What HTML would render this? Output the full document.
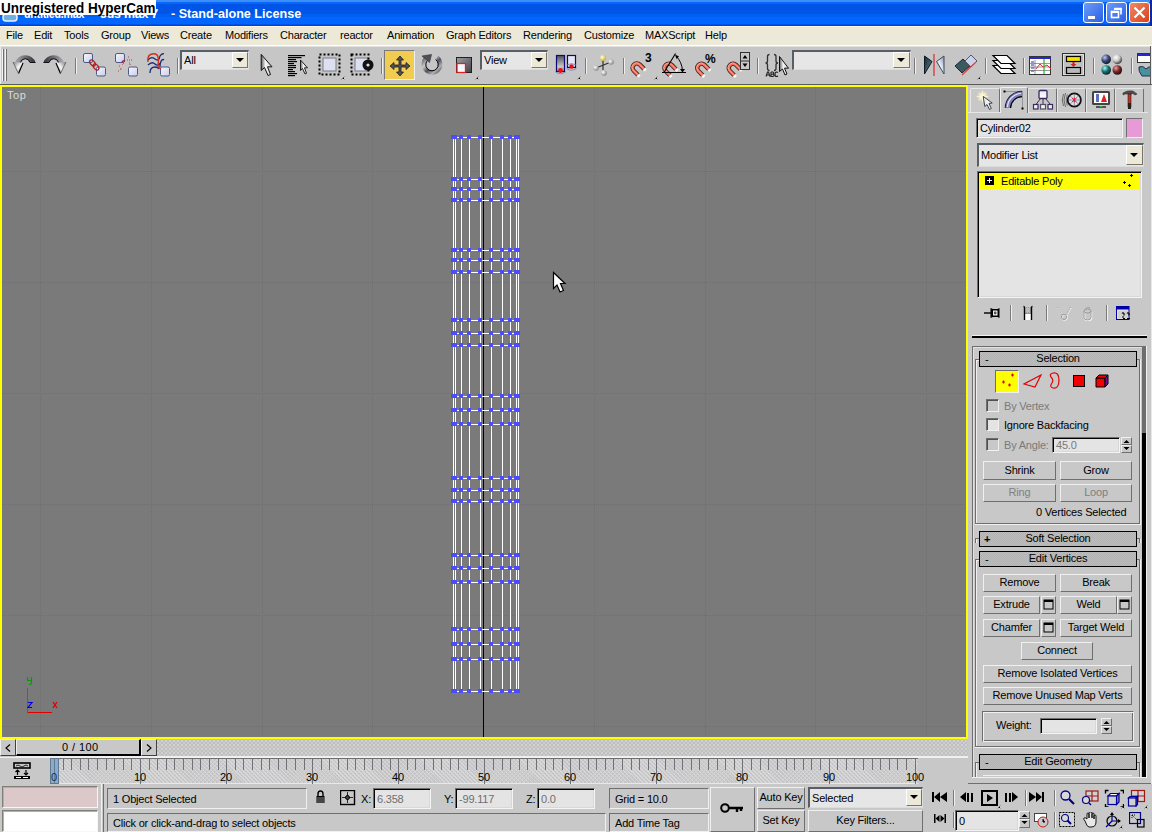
<!DOCTYPE html>
<html><head><meta charset="utf-8"><style>
html,body{margin:0;padding:0;}
body{width:1152px;height:832px;position:relative;overflow:hidden;background:#c8c8c8;font-family:"Liberation Sans",sans-serif;}
body>div{position:absolute;}
.t{position:absolute;white-space:nowrap;font-family:"Liberation Sans",sans-serif;letter-spacing:-0.2px;}
</style></head><body>
<div style="left:0px;top:0px;width:1152px;height:26px;background:linear-gradient(#3c8ef8 0 2px,#0866f8 2px 4px,#0054e6 4px 14px,#005ef2 14px 17px,#0066ff 17px 24px,#0050ea 24px 25px,#0040d4 25px 26px)"></div>
<div style="left:1150px;top:0px;width:2px;height:26px;background:#0a2a9c"></div>
<svg style="position:absolute;left:2px;top:12px;" width="17" height="10" viewBox="0 0 17 10"><rect x="1" y="2" width="14" height="7" rx="3" fill="#6fb0e0" stroke="#e8f2ff" stroke-width="1.5"/></svg>
<div class="t" style="left:24px;top:7px;font-size:13px;line-height:13px;color:#fff;font-weight:bold;transform:scaleX(0.81);transform-origin:0 0">untitled.max</div>
<div class="t" style="left:100px;top:7px;font-size:13px;line-height:13px;color:#fff;font-weight:bold;transform:scaleX(0.95);transform-origin:0 0">3ds max 7</div>
<div class="t" style="left:171px;top:7px;font-size:13px;line-height:13px;color:#fff;font-weight:bold;letter-spacing:0;transform:scaleX(0.97);transform-origin:0 0">- Stand-alone License</div>
<div style="left:1083px;top:2px;width:21px;height:21px;box-sizing:border-box;border:1px solid #fff;border-radius:3px;background:linear-gradient(135deg,#6c9cf8,#2a5fe6)"></div>
<svg style="position:absolute;left:1083px;top:2px;" width="21" height="21" viewBox="0 0 21 21"><rect x="5" y="14" width="7" height="3" fill="#fff"/></svg>
<div style="left:1106px;top:2px;width:21px;height:21px;box-sizing:border-box;border:1px solid #fff;border-radius:3px;background:linear-gradient(135deg,#6c9cf8,#2a5fe6)"></div>
<svg style="position:absolute;left:1106px;top:2px;" width="21" height="21" viewBox="0 0 21 21"><rect x="5.5" y="9.5" width="7" height="6" fill="none" stroke="#fff" stroke-width="1.6"/><rect x="5" y="9" width="8" height="2" fill="#fff"/><path d="M8.5 6.5h6.5v6" fill="none" stroke="#fff" stroke-width="1.6"/><rect x="8" y="6" width="7.5" height="2" fill="#fff"/></svg>
<div style="left:1129px;top:2px;width:21px;height:21px;box-sizing:border-box;border:1px solid #fff;border-radius:3px;background:linear-gradient(135deg,#f08a64,#d8401c)"></div>
<svg style="position:absolute;left:1129px;top:2px;" width="21" height="21" viewBox="0 0 21 21"><path d="M5.5 5.5L15.5 15.5M15.5 5.5L5.5 15.5" stroke="#fff" stroke-width="2.2"/></svg>
<div style="left:0px;top:0px;width:156px;height:15px;background:#fff"></div>
<div class="t" style="left:1px;top:1px;font-size:13.5px;line-height:13.5px;color:#000;font-weight:bold;letter-spacing:0;transform:scale(1,1.06);transform-origin:0 0">Unregistered HyperCam</div>
<div style="left:0px;top:26px;width:1152px;height:19px;background:#ece9d8"></div>
<div style="left:0px;top:26px;width:1152px;height:1px;background:#fdf8e6"></div>
<div style="left:0px;top:45px;width:1152px;height:1px;background:#fff"></div>
<div style="left:0px;top:46px;width:1152px;height:1px;background:#e0e0e0"></div>
<div class="t" style="left:6px;top:30px;font-size:11px;line-height:11px;color:#000;">File</div>
<div class="t" style="left:34px;top:30px;font-size:11px;line-height:11px;color:#000;">Edit</div>
<div class="t" style="left:64px;top:30px;font-size:11px;line-height:11px;color:#000;">Tools</div>
<div class="t" style="left:101px;top:30px;font-size:11px;line-height:11px;color:#000;">Group</div>
<div class="t" style="left:141px;top:30px;font-size:11px;line-height:11px;color:#000;">Views</div>
<div class="t" style="left:180px;top:30px;font-size:11px;line-height:11px;color:#000;">Create</div>
<div class="t" style="left:225px;top:30px;font-size:11px;line-height:11px;color:#000;">Modifiers</div>
<div class="t" style="left:280px;top:30px;font-size:11px;line-height:11px;color:#000;">Character</div>
<div class="t" style="left:340px;top:30px;font-size:11px;line-height:11px;color:#000;">reactor</div>
<div class="t" style="left:387px;top:30px;font-size:11px;line-height:11px;color:#000;">Animation</div>
<div class="t" style="left:446px;top:30px;font-size:11px;line-height:11px;color:#000;">Graph Editors</div>
<div class="t" style="left:523px;top:30px;font-size:11px;line-height:11px;color:#000;">Rendering</div>
<div class="t" style="left:584px;top:30px;font-size:11px;line-height:11px;color:#000;">Customize</div>
<div class="t" style="left:645px;top:30px;font-size:11px;line-height:11px;color:#000;">MAXScript</div>
<div class="t" style="left:705px;top:30px;font-size:11px;line-height:11px;color:#000;">Help</div>
<div style="left:0px;top:47px;width:1152px;height:37px;background:#c6c6c6"></div>
<div style="left:0px;top:47px;width:1px;height:37px;background:#ececec"></div>
<div style="left:1150px;top:46px;width:1px;height:38px;background:#5a5a5a"></div>
<div style="left:1151px;top:46px;width:1px;height:38px;background:#ece9d8"></div>
<div style="left:0px;top:84px;width:1152px;height:1px;background:#5a5a5a"></div>
<div style="left:2px;top:49px;width:1px;height:32px;background:#f4f4f4"></div>
<div style="left:3px;top:49px;width:1px;height:32px;background:#707070"></div>
<div style="left:5px;top:49px;width:1px;height:32px;background:#f4f4f4"></div>
<div style="left:6px;top:49px;width:1px;height:32px;background:#707070"></div>
<div style="left:75px;top:58px;width:1px;height:16px;background:#7a7a7a"></div>
<div style="left:76px;top:58px;width:1px;height:16px;background:#f0f0f0"></div>
<div style="left:177px;top:58px;width:1px;height:16px;background:#7a7a7a"></div>
<div style="left:178px;top:58px;width:1px;height:16px;background:#f0f0f0"></div>
<div style="left:381px;top:58px;width:1px;height:16px;background:#7a7a7a"></div>
<div style="left:382px;top:58px;width:1px;height:16px;background:#f0f0f0"></div>
<div style="left:585px;top:58px;width:1px;height:16px;background:#7a7a7a"></div>
<div style="left:586px;top:58px;width:1px;height:16px;background:#f0f0f0"></div>
<div style="left:623px;top:58px;width:1px;height:16px;background:#7a7a7a"></div>
<div style="left:624px;top:58px;width:1px;height:16px;background:#f0f0f0"></div>
<div style="left:757px;top:58px;width:1px;height:16px;background:#7a7a7a"></div>
<div style="left:758px;top:58px;width:1px;height:16px;background:#f0f0f0"></div>
<div style="left:914px;top:58px;width:1px;height:16px;background:#7a7a7a"></div>
<div style="left:915px;top:58px;width:1px;height:16px;background:#f0f0f0"></div>
<div style="left:985px;top:58px;width:1px;height:16px;background:#7a7a7a"></div>
<div style="left:986px;top:58px;width:1px;height:16px;background:#f0f0f0"></div>
<div style="left:1023px;top:58px;width:1px;height:16px;background:#7a7a7a"></div>
<div style="left:1024px;top:58px;width:1px;height:16px;background:#f0f0f0"></div>
<div style="left:1093px;top:58px;width:1px;height:16px;background:#7a7a7a"></div>
<div style="left:1094px;top:58px;width:1px;height:16px;background:#f0f0f0"></div>
<div style="left:1131px;top:58px;width:1px;height:16px;background:#7a7a7a"></div>
<div style="left:1132px;top:58px;width:1px;height:16px;background:#f0f0f0"></div>
<svg style="position:absolute;left:10px;top:50px;" width="27" height="26" viewBox="0 0 27 26"><defs><linearGradient id="arcg" x1="0" y1="0" x2="1" y2="0"><stop offset="0" stop-color="#a8a8a8"/><stop offset=".5" stop-color="#707078"/><stop offset="1" stop-color="#30303a"/></linearGradient><linearGradient id="ahg" x1="0" y1="0" x2="1" y2="1"><stop offset="0" stop-color="#808080"/><stop offset=".5" stop-color="#f4f4f8"/><stop offset="1" stop-color="#909090"/></linearGradient></defs><path d="M5 13A10.5 9.5 0 0 1 25.5 12.5H20A5 5.5 0 0 0 10.5 12.5Z" fill="url(#arcg)"/><path d="M10.5 12.5A5 5.5 0 0 1 20 12.5" fill="none" stroke="#000" stroke-width="1"/><path d="M20 12.5H25.5" stroke="#111" stroke-width="1"/><path d="M3 12L13 13L8.5 23.5Z" fill="url(#ahg)"/><path d="M13 13L8.5 23.5" stroke="#000" stroke-width="1.2"/><path d="M3 12L8.5 23.5" stroke="#555" stroke-width=".8"/></svg>
<svg style="position:absolute;left:42px;top:50px;" width="27" height="26" viewBox="0 0 27 26"><g transform="translate(27,0) scale(-1,1)"><defs><linearGradient id="arcg2" x1="0" y1="0" x2="1" y2="0"><stop offset="0" stop-color="#b0b0b8"/><stop offset=".5" stop-color="#707078"/><stop offset="1" stop-color="#30303a"/></linearGradient><linearGradient id="ahg2" x1="0" y1="0" x2="1" y2="1"><stop offset="0" stop-color="#808080"/><stop offset=".5" stop-color="#f4f4f8"/><stop offset="1" stop-color="#909090"/></linearGradient></defs><path d="M5 13A10.5 9.5 0 0 1 25.5 12.5H20A5 5.5 0 0 0 10.5 12.5Z" fill="url(#arcg2)"/><path d="M10.5 12.5A5 5.5 0 0 1 20 12.5" fill="none" stroke="#000" stroke-width="1"/><path d="M20 12.5H25.5" stroke="#111" stroke-width="1"/><path d="M3 12L13 13L8.5 23.5Z" fill="url(#ahg2)"/><path d="M13 13L8.5 23.5" stroke="#000" stroke-width="1.2"/><path d="M3 12L8.5 23.5" stroke="#555" stroke-width=".8"/></g></svg>
<svg style="position:absolute;left:82px;top:52px;" width="25" height="26" viewBox="0 0 25 26"><defs><linearGradient id="sqg" x1="0" y1="0" x2="1" y2="1"><stop offset="0" stop-color="#f8f8ff"/><stop offset="1" stop-color="#c8cce8"/></linearGradient></defs><rect x="1.5" y="1.5" width="9" height="9" rx="1.5" fill="url(#sqg)" stroke="#4a5a8a" stroke-width="1"/><rect x="14.5" y="15" width="9" height="9" rx="1.5" fill="url(#sqg)" stroke="#4a5a8a" stroke-width="1"/><ellipse cx="10.5" cy="11" rx="2.2" ry="3.5" transform="rotate(-40 10.5 11)" fill="none" stroke="#b02020" stroke-width="1.3"/><ellipse cx="14" cy="15" rx="2.2" ry="3.5" transform="rotate(-40 14 15)" fill="none" stroke="#b02020" stroke-width="1.3"/></svg>
<svg style="position:absolute;left:114px;top:52px;" width="25" height="26" viewBox="0 0 25 26"><rect x="1.5" y="1.5" width="9" height="9" rx="1.5" fill="url(#sqg)" stroke="#4a5a8a" stroke-width="1"/><rect x="14.5" y="15" width="9" height="9" rx="1.5" fill="url(#sqg)" stroke="#4a5a8a" stroke-width="1"/><path d="M8 10.5Q9 8 11 9" fill="none" stroke="#b02020" stroke-width="1.4"/><path d="M10 11L8 13M5 14h1M6 17h1M7 16.5v1M4 19h2" stroke="#c04040" stroke-width="1" stroke-dasharray="1 1"/><path d="M14 5h1M13 8h5M15 11h2M16 12v2" stroke="#c04040" stroke-width="1" stroke-dasharray="1 1"/></svg>
<svg style="position:absolute;left:147px;top:52px;" width="25" height="26" viewBox="0 0 25 26"><rect x="13.5" y="15" width="9" height="9" rx="1.5" fill="url(#sqg)" stroke="#4a5a8a" stroke-width="1"/><path d="M1 8Q4 4 8 7T13 4Q15 1 17 2M1 13Q5 9 8 12T14 10M3 21Q3 15 8 15Q11 15 12 17M13 15Q13 10 15 8Q16 7 17 8" fill="none" stroke="#1a2a7a" stroke-width="1.3"/><path d="M1 10Q0 3 5 2Q10 1 11 5Q12 9 11 12Q11 16 14 17" fill="none" stroke="#d03020" stroke-width="1.4"/></svg>
<div style="left:180px;top:50px;width:69px;height:20px;background:#e6e6e6;box-sizing:border-box;border-style:solid;border-width:2px 1px 1px 2px;border-color:#585e66 #dcdcdc #dcdcdc #585e66"></div>
<div style="left:232px;top:52px;width:16px;height:16px;background:#ece9d8;box-sizing:border-box;border:1px solid;border-color:#fff #7a7468 #7a7468 #fff"></div>
<svg style="position:absolute;left:236px;top:58px;" width="8" height="4" viewBox="0 0 8 4"><path d="M0 0H8L4 4Z" fill="#000"/></svg>
<div class="t" style="left:184px;top:55px;font-size:11px;line-height:11px;color:#000;">All</div>
<svg style="position:absolute;left:259px;top:53px;" width="16" height="24" viewBox="0 0 16 24"><defs><linearGradient id="selg" x1="0" y1="0" x2="1" y2="0"><stop offset="0" stop-color="#606060"/><stop offset=".4" stop-color="#f4f4f4"/><stop offset="1" stop-color="#d0d0d0"/></linearGradient></defs><path d="M2.2 1.4V17.5L5.5 14.5L9 22.5L11.5 21.5L8.5 13.8H13Z" fill="url(#selg)" stroke="#101010" stroke-width="1"/></svg>
<svg style="position:absolute;left:288px;top:55px;" width="20" height="22" viewBox="0 0 20 22"><rect x="0" y="0" width="17" height="1.2" fill="#000"/><rect x="0" y="2" width="13.5" height="1.2" fill="#000"/><rect x="0" y="4" width="8" height="1.2" fill="#000"/><rect x="0" y="6" width="9" height="1.2" fill="#000"/><rect x="0" y="8" width="6" height="1.2" fill="#000"/><rect x="0" y="10" width="8" height="1.2" fill="#000"/><rect x="0" y="12" width="8" height="1.2" fill="#000"/><rect x="0" y="14" width="5" height="1.2" fill="#000"/><rect x="0" y="16" width="7" height="1.2" fill="#000"/><rect x="0" y="18" width="9" height="1.2" fill="#000"/><rect x="0" y="20" width="7" height="1.2" fill="#000"/><path d="M12.5 5V15.5L14.5 13.5L17 19L18.5 18.3L16.5 12.8H19.5Z" fill="url(#selg)" stroke="#101010" stroke-width=".9"/></svg>
<svg style="position:absolute;left:318px;top:53px;" width="26" height="24" viewBox="0 0 26 24"><rect x="5" y="5" width="13" height="13" fill="#dde0ee" stroke="#7a7a8a"/><rect x="1.5" y="1.5" width="20" height="20" fill="none" stroke="#000" stroke-width="2" stroke-dasharray="2 2"/></svg>
<svg style="position:absolute;left:341px;top:76px;" width="4" height="4" viewBox="0 0 4 4"><path d="M4 0V4H0Z" fill="#000"/><path d="M3.5 0.5V3.5H0.5" fill="none" stroke="#fff" stroke-width=".8"/></svg>
<svg style="position:absolute;left:350px;top:53px;" width="25" height="24" viewBox="0 0 25 24"><rect x="5" y="5" width="13" height="13" fill="#dde0ee" stroke="#7a7a8a"/><rect x="1.5" y="1.5" width="17" height="20" fill="none" stroke="#000" stroke-width="2" stroke-dasharray="2 2"/><circle cx="18" cy="12" r="5.5" fill="#111"/><circle cx="18" cy="12" r="1.6" fill="#ddd"/></svg>
<div style="left:384px;top:50px;width:31px;height:30px;background:#f0cc50;box-sizing:border-box;border:1px solid;border-color:#7a7a7a #f0f0f0 #f0f0f0 #7a7a7a"></div>
<svg style="position:absolute;left:389px;top:55px;" width="22" height="22" viewBox="0 0 22 22"><path d="M11 1L14.5 5H12V10H17V7.5L21 11L17 14.5V12H12V17H14.5L11 21L7.5 17H10V12H5V14.5L1 11L5 7.5V10H10V5H7.5Z" fill="#505058" stroke="#202020" stroke-width=".8"/></svg>
<svg style="position:absolute;left:416px;top:48px;" width="32" height="32" viewBox="0 0 32 32"><defs><linearGradient id="rotg" x1="0" y1="0" x2="1" y2="1"><stop offset="0" stop-color="#606068"/><stop offset=".3" stop-color="#c8c8cc"/><stop offset=".55" stop-color="#505058"/><stop offset=".8" stop-color="#b0b0b8"/><stop offset="1" stop-color="#505058"/></linearGradient></defs><path d="M21 9.5A8.3 8.3 0 1 1 11 9.5" fill="none" stroke="url(#rotg)" stroke-width="4.2"/><path d="M19.6 11.6A6.2 6.2 0 1 1 12.4 11.6" fill="none" stroke="#000" stroke-width="1"/><path d="M6 8L15.5 6.5L13.5 14.5Z" fill="#505058" stroke="#333" stroke-width=".6"/></svg>
<svg style="position:absolute;left:456px;top:57px;" width="17" height="17" viewBox="0 0 17 17"><defs><linearGradient id="scg" x1="0" y1="0" x2="1" y2="1"><stop offset="0" stop-color="#a0a0a8"/><stop offset="1" stop-color="#404048"/></linearGradient></defs><rect x=".5" y=".5" width="15" height="15" fill="url(#scg)" stroke="#202020"/><rect x="1" y="6.5" width="8.5" height="9" fill="#f4f6ff" stroke="#e02020" stroke-width="1.3"/></svg>
<svg style="position:absolute;left:475px;top:76px;" width="4" height="4" viewBox="0 0 4 4"><path d="M4 0V4H0Z" fill="#000"/><path d="M3.5 0.5V3.5H0.5" fill="none" stroke="#fff" stroke-width=".8"/></svg>
<div style="left:480px;top:50px;width:68px;height:20px;background:#e6e6e6;box-sizing:border-box;border-style:solid;border-width:2px 1px 1px 2px;border-color:#585e66 #dcdcdc #dcdcdc #585e66"></div>
<div style="left:531px;top:52px;width:16px;height:16px;background:#ece9d8;box-sizing:border-box;border:1px solid;border-color:#fff #7a7468 #7a7468 #fff"></div>
<svg style="position:absolute;left:535px;top:58px;" width="8" height="4" viewBox="0 0 8 4"><path d="M0 0H8L4 4Z" fill="#000"/></svg>
<div class="t" style="left:484px;top:55px;font-size:11px;line-height:11px;color:#000;">View</div>
<svg style="position:absolute;left:554px;top:53px;" width="26" height="24" viewBox="0 0 26 24"><defs><linearGradient id="pvg" x1="0" y1="0" x2="0" y2="1"><stop offset="0" stop-color="#505058"/><stop offset=".7" stop-color="#c8c8c8"/><stop offset="1" stop-color="#909098"/></linearGradient><radialGradient id="sph" cx=".35" cy=".35" r=".7"><stop offset="0" stop-color="#fff"/><stop offset="1" stop-color="#808080"/></radialGradient><radialGradient id="sphy" cx=".35" cy=".35" r=".7"><stop offset="0" stop-color="#fffff0"/><stop offset="1" stop-color="#c8b020"/></radialGradient></defs><rect x="2.5" y="2.5" width="8" height="16" fill="url(#pvg)" stroke="#0a0a70" stroke-width="1.2"/><path d="M1.5 19Q6.5 22.5 11.5 19" fill="none" stroke="#7080c0" stroke-width=".8"/><circle cx="6.5" cy="17.5" r="2.4" fill="#e81010"/><rect x="13.5" y="2.5" width="8" height="12" fill="#e4e6f4" stroke="#0a0a70" stroke-width="1.2"/><path d="M13 12Q17.5 9 22 12M12.5 15.5Q17.5 19 22.5 15.5" fill="none" stroke="#7080c0" stroke-width=".8"/><circle cx="17.5" cy="13.5" r="2.2" fill="#e81010"/></svg>
<svg style="position:absolute;left:577px;top:76px;" width="4" height="4" viewBox="0 0 4 4"><path d="M4 0V4H0Z" fill="#000"/><path d="M3.5 0.5V3.5H0.5" fill="none" stroke="#fff" stroke-width=".8"/></svg>
<svg style="position:absolute;left:592px;top:54px;" width="24" height="22" viewBox="0 0 24 22"><path d="M11 4V16M4 14L19 8" stroke="#303038" stroke-width="1.2"/><circle cx="11" cy="4" r="3" fill="url(#sphy)"/><circle cx="19" cy="8" r="2.8" fill="url(#sph)"/><circle cx="4" cy="14" r="2.8" fill="url(#sph)"/><circle cx="12" cy="19" r="2.8" fill="url(#sph)"/></svg>
<svg style="position:absolute;left:626px;top:50px;" width="130" height="30" viewBox="0 0 130 30"><path d="M12.00 24.98L7.76 20.74A4.3 4.3 0 0 1 13.84 14.66L18.08 18.90" fill="none" stroke="#402020" stroke-width="4.4"/><path d="M12.00 24.98L7.76 20.74A4.3 4.3 0 0 1 13.84 14.66L18.08 18.90" fill="none" stroke="#f07058" stroke-width="2.8"/><path d="M12.00 24.98L7.76 20.74A4.3 4.3 0 0 1 13.84 14.66L18.08 18.90" fill="none" stroke="#ffb0a0" stroke-width="0.8" transform="translate(-0.5,-0.5)"/><path d="M12.00 24.98L13.56 26.54M18.08 18.90L19.64 20.46" stroke="#fff" stroke-width="3"/><text x="19" y="12" font-family="Liberation Sans" font-weight="bold" font-size="12">3</text><path d="M43.90 25.28L39.66 21.04A4.3 4.3 0 0 1 45.74 14.96L49.98 19.20" fill="none" stroke="#402020" stroke-width="4.4"/><path d="M43.90 25.28L39.66 21.04A4.3 4.3 0 0 1 45.74 14.96L49.98 19.20" fill="none" stroke="#f07058" stroke-width="2.8"/><path d="M43.90 25.28L39.66 21.04A4.3 4.3 0 0 1 45.74 14.96L49.98 19.20" fill="none" stroke="#ffb0a0" stroke-width="0.8" transform="translate(-0.5,-0.5)"/><path d="M43.90 25.28L45.46 26.84M49.98 19.20L51.54 20.76" stroke="#fff" stroke-width="3"/><path d="M36 22.5H60M38 22.5L49.5 3.5" fill="none" stroke="#000" stroke-width="1.1"/><path d="M50 6Q56 12 56.5 21" fill="none" stroke="#000" stroke-width="1"/><path d="M49 4.5L53 6.5L50.5 9Z M54 19L59 19L56.5 22.5Z" fill="#000"/><path d="M76.70 25.28L72.46 21.04A4.3 4.3 0 0 1 78.54 14.96L82.78 19.20" fill="none" stroke="#402020" stroke-width="4.4"/><path d="M76.70 25.28L72.46 21.04A4.3 4.3 0 0 1 78.54 14.96L82.78 19.20" fill="none" stroke="#f07058" stroke-width="2.8"/><path d="M76.70 25.28L72.46 21.04A4.3 4.3 0 0 1 78.54 14.96L82.78 19.20" fill="none" stroke="#ffb0a0" stroke-width="0.8" transform="translate(-0.5,-0.5)"/><path d="M76.70 25.28L78.26 26.84M82.78 19.20L84.34 20.76" stroke="#fff" stroke-width="3"/><text x="79" y="13" font-family="Liberation Sans" font-weight="bold" font-size="12">%</text><path d="M108.20 25.28L103.96 21.04A4.3 4.3 0 0 1 110.04 14.96L114.28 19.20" fill="none" stroke="#402020" stroke-width="4.4"/><path d="M108.20 25.28L103.96 21.04A4.3 4.3 0 0 1 110.04 14.96L114.28 19.20" fill="none" stroke="#f07058" stroke-width="2.8"/><path d="M108.20 25.28L103.96 21.04A4.3 4.3 0 0 1 110.04 14.96L114.28 19.20" fill="none" stroke="#ffb0a0" stroke-width="0.8" transform="translate(-0.5,-0.5)"/><path d="M108.20 25.28L109.76 26.84M114.28 19.20L115.84 20.76" stroke="#fff" stroke-width="3"/><rect x="114.5" y="2.5" width="9" height="17" fill="#c8c8c8" stroke="#303030"/><path d="M114.5 11H123.5" stroke="#303030"/><path d="M116.5 8.5L119 5L121.5 8.5ZM116.5 13.5L119 17L121.5 13.5Z" fill="#000"/></svg>
<svg style="position:absolute;left:654px;top:76px;" width="4" height="4" viewBox="0 0 4 4"><path d="M4 0V4H0Z" fill="#000"/><path d="M3.5 0.5V3.5H0.5" fill="none" stroke="#fff" stroke-width=".8"/></svg>
<svg style="position:absolute;left:762px;top:52px;" width="28" height="26" viewBox="0 0 28 26"><path d="M7.5 2.5Q5.5 2.5 5.5 4.5V9Q5.5 11 3.5 11Q5.5 11 5.5 13V16.5Q5.5 18.5 7.5 18.5M12 2.5Q14 2.5 14 4.5V9Q14 11 16 11Q14 11 14 13V16.5Q14 18.5 12 18.5" fill="none" stroke="#303030" stroke-width="1.3"/><path d="M4 24.5L5.5 20H6.5L8 24.5M4.7 23H7.3M9 20V24.5H11Q12 24.5 12 23.3Q12 22.2 11 22.2H9M9 20H10.8Q11.7 20 11.7 21.1Q11.7 22.2 10.8 22.2M16 20.5Q15.5 20 14.5 20Q13 20 13 22.2Q13 24.5 14.5 24.5Q15.5 24.5 16 24" fill="none" stroke="#202020" stroke-width="1.1"/><path d="M17.5 4.5V19.5L20.5 17L23 23L25 22L22.5 16.2H26.5Z" fill="url(#selg)" stroke="#101010" stroke-width="1"/></svg>
<div style="left:792px;top:50px;width:119px;height:20px;background:#e6e6e6;box-sizing:border-box;border-style:solid;border-width:2px 1px 1px 2px;border-color:#585e66 #dcdcdc #dcdcdc #585e66"></div>
<div style="left:893px;top:52px;width:17px;height:16px;background:#ece9d8;box-sizing:border-box;border:1px solid;border-color:#fff #7a7468 #7a7468 #fff"></div>
<svg style="position:absolute;left:897px;top:58px;" width="8" height="4" viewBox="0 0 8 4"><path d="M0 0H8L4 4Z" fill="#000"/></svg>
<svg style="position:absolute;left:923px;top:53px;" width="23" height="23" viewBox="0 0 23 23"><defs><linearGradient id="mrl" x1="0" y1="0" x2="1" y2="1"><stop offset="0" stop-color="#102838"/><stop offset="1" stop-color="#6a8a90"/></linearGradient><linearGradient id="mrr" x1="1" y1="0" x2="0" y2="1"><stop offset="0" stop-color="#8090a8"/><stop offset=".5" stop-color="#e8ecf8"/><stop offset="1" stop-color="#7a8898"/></linearGradient></defs><path d="M1.5 3L9 8.5L1.5 21Z" fill="url(#mrl)" stroke="#101820" stroke-width="1"/><path d="M21 3L13.5 8.5L21 21Z" fill="url(#mrr)" stroke="#404858" stroke-width="1"/><path d="M11 1V23" stroke="#d85050" stroke-width="1.6"/></svg>
<svg style="position:absolute;left:954px;top:54px;" width="24" height="22" viewBox="0 0 24 22"><path d="M1 12L9 5L16 12L8 19Z" fill="#3a5a60" stroke="#223"/><path d="M11 7L17 1L23 7L17 13Z" fill="#c8d4ec" stroke="#556"/><path d="M8 21L22 8" stroke="#e04040" stroke-width="1.2"/></svg>
<svg style="position:absolute;left:977px;top:76px;" width="4" height="4" viewBox="0 0 4 4"><path d="M4 0V4H0Z" fill="#000"/><path d="M3.5 0.5V3.5H0.5" fill="none" stroke="#fff" stroke-width=".8"/></svg>
<svg style="position:absolute;left:990px;top:50px;" width="28" height="28" viewBox="0 0 28 28"><path d="M3 15.5H17L25 23.5H11Z" fill="#fff" stroke="#000" stroke-width="1.2"/><path d="M3 10.5H17L25 18.5H11Z" fill="#fff" stroke="#000" stroke-width="1.2"/><path d="M3 5.5H17L25 13.5H11Z" fill="#fff" stroke="#000" stroke-width="1.2"/></svg>
<svg style="position:absolute;left:1029px;top:56px;" width="23" height="20" viewBox="0 0 23 20"><rect x=".5" y=".5" width="21" height="18" fill="#fff" stroke="#333"/><rect x="1" y="1" width="21" height="2" fill="#2828c8"/><path d="M2 6h3M2 9h3M2 12h3M2 15h3" stroke="#2828c8" stroke-width="1.2"/><path d="M6 4V18M1 7.5H22M1 11H22M1 14.5H22" stroke="#555" stroke-width=".6"/><path d="M7 13L11 8L14 11L18 9L22 13" fill="none" stroke="#d03030"/><path d="M15 3V18" stroke="#30b030" stroke-width="1.2"/></svg>
<svg style="position:absolute;left:1062px;top:53px;" width="24" height="24" viewBox="0 0 24 24"><rect x=".5" y=".5" width="22" height="22" fill="#c0c0c0" stroke="#303030" stroke-width="1"/><rect x="1.5" y="1.5" width="20" height="20" fill="none" stroke="#e8e8e8" stroke-width=".8"/><rect x="4.5" y="3.5" width="14" height="5" fill="#f8e000" stroke="#000" stroke-width="1.2"/><rect x="4.5" y="14.5" width="14" height="6" fill="#b8b8b8" stroke="#000" stroke-width="1.2"/><path d="M8.5 11L11.5 14L14.5 11Z" fill="#d02020"/><path d="M11.5 9V12" stroke="#d02020" stroke-width="2"/></svg>
<svg style="position:absolute;left:1100px;top:53px;" width="24" height="24" viewBox="0 0 24 24"><defs><radialGradient id="sp1" cx=".35" cy=".3" r=".75"><stop offset="0" stop-color="#c0c8f0"/><stop offset=".5" stop-color="#3a4a78"/><stop offset="1" stop-color="#101828"/></radialGradient><radialGradient id="sp2" cx=".35" cy=".3" r=".75"><stop offset="0" stop-color="#ffffff"/><stop offset=".5" stop-color="#c8c8c8"/><stop offset="1" stop-color="#303030"/></radialGradient><radialGradient id="sp3" cx=".35" cy=".3" r=".75"><stop offset="0" stop-color="#a0ffff"/><stop offset=".5" stop-color="#1a7070"/><stop offset="1" stop-color="#082020"/></radialGradient><radialGradient id="sp4" cx=".35" cy=".3" r=".75"><stop offset="0" stop-color="#f0a0a0"/><stop offset=".5" stop-color="#7a2a2a"/><stop offset="1" stop-color="#200808"/></radialGradient></defs><circle cx="6.2" cy="6.4" r="4.8" fill="url(#sp1)"/><circle cx="17.3" cy="6.4" r="4.8" fill="url(#sp2)"/><circle cx="6.2" cy="17" r="4.8" fill="url(#sp3)"/><circle cx="17.3" cy="17" r="4.8" fill="url(#sp4)"/></svg>
<svg style="position:absolute;left:1137px;top:53px;" width="13" height="24" viewBox="0 0 13 24"><rect x=".5" y=".5" width="14" height="9" fill="#fff" stroke="#333"/><rect x="1" y="1" width="14" height="2" fill="#2828c8"/><path d="M2 14Q6 12 9 16Q12 13 14 14V23H5Q1 18 2 14Z" fill="#4a90a0" stroke="#234"/></svg>
<div style="left:0px;top:85px;width:968px;height:654px;background:#ffff00"></div>
<div style="left:2px;top:87px;width:964px;height:650px;background:#7a7a7a"></div>
<div style="left:40px;top:87px;width:1px;height:650px;background:repeating-linear-gradient(#707074 0 1px,transparent 1px 2px)"></div>
<div style="left:151px;top:87px;width:1px;height:650px;background:repeating-linear-gradient(#707074 0 1px,transparent 1px 2px)"></div>
<div style="left:262px;top:87px;width:1px;height:650px;background:repeating-linear-gradient(#707074 0 1px,transparent 1px 2px)"></div>
<div style="left:372px;top:87px;width:1px;height:650px;background:repeating-linear-gradient(#707074 0 1px,transparent 1px 2px)"></div>
<div style="left:594px;top:87px;width:1px;height:650px;background:repeating-linear-gradient(#707074 0 1px,transparent 1px 2px)"></div>
<div style="left:705px;top:87px;width:1px;height:650px;background:repeating-linear-gradient(#707074 0 1px,transparent 1px 2px)"></div>
<div style="left:815px;top:87px;width:1px;height:650px;background:repeating-linear-gradient(#707074 0 1px,transparent 1px 2px)"></div>
<div style="left:926px;top:87px;width:1px;height:650px;background:repeating-linear-gradient(#707074 0 1px,transparent 1px 2px)"></div>
<div style="left:2px;top:171px;width:964px;height:1px;background:repeating-linear-gradient(90deg,#707074 0 1px,transparent 1px 2px)"></div>
<div style="left:2px;top:282px;width:964px;height:1px;background:repeating-linear-gradient(90deg,#707074 0 1px,transparent 1px 2px)"></div>
<div style="left:2px;top:393px;width:964px;height:1px;background:repeating-linear-gradient(90deg,#707074 0 1px,transparent 1px 2px)"></div>
<div style="left:2px;top:504px;width:964px;height:1px;background:repeating-linear-gradient(90deg,#707074 0 1px,transparent 1px 2px)"></div>
<div style="left:2px;top:615px;width:964px;height:1px;background:repeating-linear-gradient(90deg,#707074 0 1px,transparent 1px 2px)"></div>
<div style="left:2px;top:726px;width:964px;height:1px;background:repeating-linear-gradient(90deg,#707074 0 1px,transparent 1px 2px)"></div>
<div style="left:483px;top:87px;width:1px;height:650px;background:#000"></div>
<div style="left:453px;top:137px;width:1px;height:555px;background:#fff"></div>
<div style="left:455px;top:137px;width:1px;height:555px;background:#fff"></div>
<div style="left:461px;top:137px;width:1px;height:555px;background:#fff"></div>
<div style="left:469px;top:137px;width:1px;height:555px;background:#fff"></div>
<div style="left:480px;top:137px;width:1px;height:555px;background:#fff"></div>
<div style="left:491px;top:137px;width:1px;height:555px;background:#fff"></div>
<div style="left:502px;top:137px;width:1px;height:555px;background:#fff"></div>
<div style="left:510px;top:137px;width:1px;height:555px;background:#fff"></div>
<div style="left:516px;top:137px;width:1px;height:555px;background:#fff"></div>
<div style="left:518px;top:137px;width:1px;height:555px;background:#fff"></div>
<div style="left:453px;top:137px;width:66px;height:1px;background:#fff"></div>
<div style="left:453px;top:179px;width:66px;height:1px;background:#fff"></div>
<div style="left:453px;top:189px;width:66px;height:1px;background:#fff"></div>
<div style="left:453px;top:200px;width:66px;height:1px;background:#fff"></div>
<div style="left:453px;top:250px;width:66px;height:1px;background:#fff"></div>
<div style="left:453px;top:260px;width:66px;height:1px;background:#fff"></div>
<div style="left:453px;top:272px;width:66px;height:1px;background:#fff"></div>
<div style="left:453px;top:320px;width:66px;height:1px;background:#fff"></div>
<div style="left:453px;top:333px;width:66px;height:1px;background:#fff"></div>
<div style="left:453px;top:345px;width:66px;height:1px;background:#fff"></div>
<div style="left:453px;top:396px;width:66px;height:1px;background:#fff"></div>
<div style="left:453px;top:410px;width:66px;height:1px;background:#fff"></div>
<div style="left:453px;top:424px;width:66px;height:1px;background:#fff"></div>
<div style="left:453px;top:478px;width:66px;height:1px;background:#fff"></div>
<div style="left:453px;top:490px;width:66px;height:1px;background:#fff"></div>
<div style="left:453px;top:501px;width:66px;height:1px;background:#fff"></div>
<div style="left:453px;top:555px;width:66px;height:1px;background:#fff"></div>
<div style="left:453px;top:568px;width:66px;height:1px;background:#fff"></div>
<div style="left:453px;top:582px;width:66px;height:1px;background:#fff"></div>
<div style="left:453px;top:629px;width:66px;height:1px;background:#fff"></div>
<div style="left:453px;top:644px;width:66px;height:1px;background:#fff"></div>
<div style="left:453px;top:659px;width:66px;height:1px;background:#fff"></div>
<div style="left:453px;top:691px;width:66px;height:1px;background:#fff"></div>
<div style="left:451px;top:135px;width:4px;height:4px;background:#4c4cff"></div>
<div style="left:453px;top:135px;width:4px;height:4px;background:#4c4cff"></div>
<div style="left:459px;top:135px;width:4px;height:4px;background:#4c4cff"></div>
<div style="left:467px;top:135px;width:4px;height:4px;background:#4c4cff"></div>
<div style="left:478px;top:135px;width:4px;height:4px;background:#4c4cff"></div>
<div style="left:489px;top:135px;width:4px;height:4px;background:#4c4cff"></div>
<div style="left:500px;top:135px;width:4px;height:4px;background:#4c4cff"></div>
<div style="left:508px;top:135px;width:4px;height:4px;background:#4c4cff"></div>
<div style="left:514px;top:135px;width:4px;height:4px;background:#4c4cff"></div>
<div style="left:516px;top:135px;width:4px;height:4px;background:#4c4cff"></div>
<div style="left:451px;top:177px;width:4px;height:4px;background:#4c4cff"></div>
<div style="left:453px;top:177px;width:4px;height:4px;background:#4c4cff"></div>
<div style="left:459px;top:177px;width:4px;height:4px;background:#4c4cff"></div>
<div style="left:467px;top:177px;width:4px;height:4px;background:#4c4cff"></div>
<div style="left:478px;top:177px;width:4px;height:4px;background:#4c4cff"></div>
<div style="left:489px;top:177px;width:4px;height:4px;background:#4c4cff"></div>
<div style="left:500px;top:177px;width:4px;height:4px;background:#4c4cff"></div>
<div style="left:508px;top:177px;width:4px;height:4px;background:#4c4cff"></div>
<div style="left:514px;top:177px;width:4px;height:4px;background:#4c4cff"></div>
<div style="left:516px;top:177px;width:4px;height:4px;background:#4c4cff"></div>
<div style="left:451px;top:187px;width:4px;height:4px;background:#4c4cff"></div>
<div style="left:453px;top:187px;width:4px;height:4px;background:#4c4cff"></div>
<div style="left:459px;top:187px;width:4px;height:4px;background:#4c4cff"></div>
<div style="left:467px;top:187px;width:4px;height:4px;background:#4c4cff"></div>
<div style="left:478px;top:187px;width:4px;height:4px;background:#4c4cff"></div>
<div style="left:489px;top:187px;width:4px;height:4px;background:#4c4cff"></div>
<div style="left:500px;top:187px;width:4px;height:4px;background:#4c4cff"></div>
<div style="left:508px;top:187px;width:4px;height:4px;background:#4c4cff"></div>
<div style="left:514px;top:187px;width:4px;height:4px;background:#4c4cff"></div>
<div style="left:516px;top:187px;width:4px;height:4px;background:#4c4cff"></div>
<div style="left:451px;top:198px;width:4px;height:4px;background:#4c4cff"></div>
<div style="left:453px;top:198px;width:4px;height:4px;background:#4c4cff"></div>
<div style="left:459px;top:198px;width:4px;height:4px;background:#4c4cff"></div>
<div style="left:467px;top:198px;width:4px;height:4px;background:#4c4cff"></div>
<div style="left:478px;top:198px;width:4px;height:4px;background:#4c4cff"></div>
<div style="left:489px;top:198px;width:4px;height:4px;background:#4c4cff"></div>
<div style="left:500px;top:198px;width:4px;height:4px;background:#4c4cff"></div>
<div style="left:508px;top:198px;width:4px;height:4px;background:#4c4cff"></div>
<div style="left:514px;top:198px;width:4px;height:4px;background:#4c4cff"></div>
<div style="left:516px;top:198px;width:4px;height:4px;background:#4c4cff"></div>
<div style="left:451px;top:248px;width:4px;height:4px;background:#4c4cff"></div>
<div style="left:453px;top:248px;width:4px;height:4px;background:#4c4cff"></div>
<div style="left:459px;top:248px;width:4px;height:4px;background:#4c4cff"></div>
<div style="left:467px;top:248px;width:4px;height:4px;background:#4c4cff"></div>
<div style="left:478px;top:248px;width:4px;height:4px;background:#4c4cff"></div>
<div style="left:489px;top:248px;width:4px;height:4px;background:#4c4cff"></div>
<div style="left:500px;top:248px;width:4px;height:4px;background:#4c4cff"></div>
<div style="left:508px;top:248px;width:4px;height:4px;background:#4c4cff"></div>
<div style="left:514px;top:248px;width:4px;height:4px;background:#4c4cff"></div>
<div style="left:516px;top:248px;width:4px;height:4px;background:#4c4cff"></div>
<div style="left:451px;top:258px;width:4px;height:4px;background:#4c4cff"></div>
<div style="left:453px;top:258px;width:4px;height:4px;background:#4c4cff"></div>
<div style="left:459px;top:258px;width:4px;height:4px;background:#4c4cff"></div>
<div style="left:467px;top:258px;width:4px;height:4px;background:#4c4cff"></div>
<div style="left:478px;top:258px;width:4px;height:4px;background:#4c4cff"></div>
<div style="left:489px;top:258px;width:4px;height:4px;background:#4c4cff"></div>
<div style="left:500px;top:258px;width:4px;height:4px;background:#4c4cff"></div>
<div style="left:508px;top:258px;width:4px;height:4px;background:#4c4cff"></div>
<div style="left:514px;top:258px;width:4px;height:4px;background:#4c4cff"></div>
<div style="left:516px;top:258px;width:4px;height:4px;background:#4c4cff"></div>
<div style="left:451px;top:270px;width:4px;height:4px;background:#4c4cff"></div>
<div style="left:453px;top:270px;width:4px;height:4px;background:#4c4cff"></div>
<div style="left:459px;top:270px;width:4px;height:4px;background:#4c4cff"></div>
<div style="left:467px;top:270px;width:4px;height:4px;background:#4c4cff"></div>
<div style="left:478px;top:270px;width:4px;height:4px;background:#4c4cff"></div>
<div style="left:489px;top:270px;width:4px;height:4px;background:#4c4cff"></div>
<div style="left:500px;top:270px;width:4px;height:4px;background:#4c4cff"></div>
<div style="left:508px;top:270px;width:4px;height:4px;background:#4c4cff"></div>
<div style="left:514px;top:270px;width:4px;height:4px;background:#4c4cff"></div>
<div style="left:516px;top:270px;width:4px;height:4px;background:#4c4cff"></div>
<div style="left:451px;top:318px;width:4px;height:4px;background:#4c4cff"></div>
<div style="left:453px;top:318px;width:4px;height:4px;background:#4c4cff"></div>
<div style="left:459px;top:318px;width:4px;height:4px;background:#4c4cff"></div>
<div style="left:467px;top:318px;width:4px;height:4px;background:#4c4cff"></div>
<div style="left:478px;top:318px;width:4px;height:4px;background:#4c4cff"></div>
<div style="left:489px;top:318px;width:4px;height:4px;background:#4c4cff"></div>
<div style="left:500px;top:318px;width:4px;height:4px;background:#4c4cff"></div>
<div style="left:508px;top:318px;width:4px;height:4px;background:#4c4cff"></div>
<div style="left:514px;top:318px;width:4px;height:4px;background:#4c4cff"></div>
<div style="left:516px;top:318px;width:4px;height:4px;background:#4c4cff"></div>
<div style="left:451px;top:331px;width:4px;height:4px;background:#4c4cff"></div>
<div style="left:453px;top:331px;width:4px;height:4px;background:#4c4cff"></div>
<div style="left:459px;top:331px;width:4px;height:4px;background:#4c4cff"></div>
<div style="left:467px;top:331px;width:4px;height:4px;background:#4c4cff"></div>
<div style="left:478px;top:331px;width:4px;height:4px;background:#4c4cff"></div>
<div style="left:489px;top:331px;width:4px;height:4px;background:#4c4cff"></div>
<div style="left:500px;top:331px;width:4px;height:4px;background:#4c4cff"></div>
<div style="left:508px;top:331px;width:4px;height:4px;background:#4c4cff"></div>
<div style="left:514px;top:331px;width:4px;height:4px;background:#4c4cff"></div>
<div style="left:516px;top:331px;width:4px;height:4px;background:#4c4cff"></div>
<div style="left:451px;top:343px;width:4px;height:4px;background:#4c4cff"></div>
<div style="left:453px;top:343px;width:4px;height:4px;background:#4c4cff"></div>
<div style="left:459px;top:343px;width:4px;height:4px;background:#4c4cff"></div>
<div style="left:467px;top:343px;width:4px;height:4px;background:#4c4cff"></div>
<div style="left:478px;top:343px;width:4px;height:4px;background:#4c4cff"></div>
<div style="left:489px;top:343px;width:4px;height:4px;background:#4c4cff"></div>
<div style="left:500px;top:343px;width:4px;height:4px;background:#4c4cff"></div>
<div style="left:508px;top:343px;width:4px;height:4px;background:#4c4cff"></div>
<div style="left:514px;top:343px;width:4px;height:4px;background:#4c4cff"></div>
<div style="left:516px;top:343px;width:4px;height:4px;background:#4c4cff"></div>
<div style="left:451px;top:394px;width:4px;height:4px;background:#4c4cff"></div>
<div style="left:453px;top:394px;width:4px;height:4px;background:#4c4cff"></div>
<div style="left:459px;top:394px;width:4px;height:4px;background:#4c4cff"></div>
<div style="left:467px;top:394px;width:4px;height:4px;background:#4c4cff"></div>
<div style="left:478px;top:394px;width:4px;height:4px;background:#4c4cff"></div>
<div style="left:489px;top:394px;width:4px;height:4px;background:#4c4cff"></div>
<div style="left:500px;top:394px;width:4px;height:4px;background:#4c4cff"></div>
<div style="left:508px;top:394px;width:4px;height:4px;background:#4c4cff"></div>
<div style="left:514px;top:394px;width:4px;height:4px;background:#4c4cff"></div>
<div style="left:516px;top:394px;width:4px;height:4px;background:#4c4cff"></div>
<div style="left:451px;top:408px;width:4px;height:4px;background:#4c4cff"></div>
<div style="left:453px;top:408px;width:4px;height:4px;background:#4c4cff"></div>
<div style="left:459px;top:408px;width:4px;height:4px;background:#4c4cff"></div>
<div style="left:467px;top:408px;width:4px;height:4px;background:#4c4cff"></div>
<div style="left:478px;top:408px;width:4px;height:4px;background:#4c4cff"></div>
<div style="left:489px;top:408px;width:4px;height:4px;background:#4c4cff"></div>
<div style="left:500px;top:408px;width:4px;height:4px;background:#4c4cff"></div>
<div style="left:508px;top:408px;width:4px;height:4px;background:#4c4cff"></div>
<div style="left:514px;top:408px;width:4px;height:4px;background:#4c4cff"></div>
<div style="left:516px;top:408px;width:4px;height:4px;background:#4c4cff"></div>
<div style="left:451px;top:422px;width:4px;height:4px;background:#4c4cff"></div>
<div style="left:453px;top:422px;width:4px;height:4px;background:#4c4cff"></div>
<div style="left:459px;top:422px;width:4px;height:4px;background:#4c4cff"></div>
<div style="left:467px;top:422px;width:4px;height:4px;background:#4c4cff"></div>
<div style="left:478px;top:422px;width:4px;height:4px;background:#4c4cff"></div>
<div style="left:489px;top:422px;width:4px;height:4px;background:#4c4cff"></div>
<div style="left:500px;top:422px;width:4px;height:4px;background:#4c4cff"></div>
<div style="left:508px;top:422px;width:4px;height:4px;background:#4c4cff"></div>
<div style="left:514px;top:422px;width:4px;height:4px;background:#4c4cff"></div>
<div style="left:516px;top:422px;width:4px;height:4px;background:#4c4cff"></div>
<div style="left:451px;top:476px;width:4px;height:4px;background:#4c4cff"></div>
<div style="left:453px;top:476px;width:4px;height:4px;background:#4c4cff"></div>
<div style="left:459px;top:476px;width:4px;height:4px;background:#4c4cff"></div>
<div style="left:467px;top:476px;width:4px;height:4px;background:#4c4cff"></div>
<div style="left:478px;top:476px;width:4px;height:4px;background:#4c4cff"></div>
<div style="left:489px;top:476px;width:4px;height:4px;background:#4c4cff"></div>
<div style="left:500px;top:476px;width:4px;height:4px;background:#4c4cff"></div>
<div style="left:508px;top:476px;width:4px;height:4px;background:#4c4cff"></div>
<div style="left:514px;top:476px;width:4px;height:4px;background:#4c4cff"></div>
<div style="left:516px;top:476px;width:4px;height:4px;background:#4c4cff"></div>
<div style="left:451px;top:488px;width:4px;height:4px;background:#4c4cff"></div>
<div style="left:453px;top:488px;width:4px;height:4px;background:#4c4cff"></div>
<div style="left:459px;top:488px;width:4px;height:4px;background:#4c4cff"></div>
<div style="left:467px;top:488px;width:4px;height:4px;background:#4c4cff"></div>
<div style="left:478px;top:488px;width:4px;height:4px;background:#4c4cff"></div>
<div style="left:489px;top:488px;width:4px;height:4px;background:#4c4cff"></div>
<div style="left:500px;top:488px;width:4px;height:4px;background:#4c4cff"></div>
<div style="left:508px;top:488px;width:4px;height:4px;background:#4c4cff"></div>
<div style="left:514px;top:488px;width:4px;height:4px;background:#4c4cff"></div>
<div style="left:516px;top:488px;width:4px;height:4px;background:#4c4cff"></div>
<div style="left:451px;top:499px;width:4px;height:4px;background:#4c4cff"></div>
<div style="left:453px;top:499px;width:4px;height:4px;background:#4c4cff"></div>
<div style="left:459px;top:499px;width:4px;height:4px;background:#4c4cff"></div>
<div style="left:467px;top:499px;width:4px;height:4px;background:#4c4cff"></div>
<div style="left:478px;top:499px;width:4px;height:4px;background:#4c4cff"></div>
<div style="left:489px;top:499px;width:4px;height:4px;background:#4c4cff"></div>
<div style="left:500px;top:499px;width:4px;height:4px;background:#4c4cff"></div>
<div style="left:508px;top:499px;width:4px;height:4px;background:#4c4cff"></div>
<div style="left:514px;top:499px;width:4px;height:4px;background:#4c4cff"></div>
<div style="left:516px;top:499px;width:4px;height:4px;background:#4c4cff"></div>
<div style="left:451px;top:553px;width:4px;height:4px;background:#4c4cff"></div>
<div style="left:453px;top:553px;width:4px;height:4px;background:#4c4cff"></div>
<div style="left:459px;top:553px;width:4px;height:4px;background:#4c4cff"></div>
<div style="left:467px;top:553px;width:4px;height:4px;background:#4c4cff"></div>
<div style="left:478px;top:553px;width:4px;height:4px;background:#4c4cff"></div>
<div style="left:489px;top:553px;width:4px;height:4px;background:#4c4cff"></div>
<div style="left:500px;top:553px;width:4px;height:4px;background:#4c4cff"></div>
<div style="left:508px;top:553px;width:4px;height:4px;background:#4c4cff"></div>
<div style="left:514px;top:553px;width:4px;height:4px;background:#4c4cff"></div>
<div style="left:516px;top:553px;width:4px;height:4px;background:#4c4cff"></div>
<div style="left:451px;top:566px;width:4px;height:4px;background:#4c4cff"></div>
<div style="left:453px;top:566px;width:4px;height:4px;background:#4c4cff"></div>
<div style="left:459px;top:566px;width:4px;height:4px;background:#4c4cff"></div>
<div style="left:467px;top:566px;width:4px;height:4px;background:#4c4cff"></div>
<div style="left:478px;top:566px;width:4px;height:4px;background:#4c4cff"></div>
<div style="left:489px;top:566px;width:4px;height:4px;background:#4c4cff"></div>
<div style="left:500px;top:566px;width:4px;height:4px;background:#4c4cff"></div>
<div style="left:508px;top:566px;width:4px;height:4px;background:#4c4cff"></div>
<div style="left:514px;top:566px;width:4px;height:4px;background:#4c4cff"></div>
<div style="left:516px;top:566px;width:4px;height:4px;background:#4c4cff"></div>
<div style="left:451px;top:580px;width:4px;height:4px;background:#4c4cff"></div>
<div style="left:453px;top:580px;width:4px;height:4px;background:#4c4cff"></div>
<div style="left:459px;top:580px;width:4px;height:4px;background:#4c4cff"></div>
<div style="left:467px;top:580px;width:4px;height:4px;background:#4c4cff"></div>
<div style="left:478px;top:580px;width:4px;height:4px;background:#4c4cff"></div>
<div style="left:489px;top:580px;width:4px;height:4px;background:#4c4cff"></div>
<div style="left:500px;top:580px;width:4px;height:4px;background:#4c4cff"></div>
<div style="left:508px;top:580px;width:4px;height:4px;background:#4c4cff"></div>
<div style="left:514px;top:580px;width:4px;height:4px;background:#4c4cff"></div>
<div style="left:516px;top:580px;width:4px;height:4px;background:#4c4cff"></div>
<div style="left:451px;top:627px;width:4px;height:4px;background:#4c4cff"></div>
<div style="left:453px;top:627px;width:4px;height:4px;background:#4c4cff"></div>
<div style="left:459px;top:627px;width:4px;height:4px;background:#4c4cff"></div>
<div style="left:467px;top:627px;width:4px;height:4px;background:#4c4cff"></div>
<div style="left:478px;top:627px;width:4px;height:4px;background:#4c4cff"></div>
<div style="left:489px;top:627px;width:4px;height:4px;background:#4c4cff"></div>
<div style="left:500px;top:627px;width:4px;height:4px;background:#4c4cff"></div>
<div style="left:508px;top:627px;width:4px;height:4px;background:#4c4cff"></div>
<div style="left:514px;top:627px;width:4px;height:4px;background:#4c4cff"></div>
<div style="left:516px;top:627px;width:4px;height:4px;background:#4c4cff"></div>
<div style="left:451px;top:642px;width:4px;height:4px;background:#4c4cff"></div>
<div style="left:453px;top:642px;width:4px;height:4px;background:#4c4cff"></div>
<div style="left:459px;top:642px;width:4px;height:4px;background:#4c4cff"></div>
<div style="left:467px;top:642px;width:4px;height:4px;background:#4c4cff"></div>
<div style="left:478px;top:642px;width:4px;height:4px;background:#4c4cff"></div>
<div style="left:489px;top:642px;width:4px;height:4px;background:#4c4cff"></div>
<div style="left:500px;top:642px;width:4px;height:4px;background:#4c4cff"></div>
<div style="left:508px;top:642px;width:4px;height:4px;background:#4c4cff"></div>
<div style="left:514px;top:642px;width:4px;height:4px;background:#4c4cff"></div>
<div style="left:516px;top:642px;width:4px;height:4px;background:#4c4cff"></div>
<div style="left:451px;top:657px;width:4px;height:4px;background:#4c4cff"></div>
<div style="left:453px;top:657px;width:4px;height:4px;background:#4c4cff"></div>
<div style="left:459px;top:657px;width:4px;height:4px;background:#4c4cff"></div>
<div style="left:467px;top:657px;width:4px;height:4px;background:#4c4cff"></div>
<div style="left:478px;top:657px;width:4px;height:4px;background:#4c4cff"></div>
<div style="left:489px;top:657px;width:4px;height:4px;background:#4c4cff"></div>
<div style="left:500px;top:657px;width:4px;height:4px;background:#4c4cff"></div>
<div style="left:508px;top:657px;width:4px;height:4px;background:#4c4cff"></div>
<div style="left:514px;top:657px;width:4px;height:4px;background:#4c4cff"></div>
<div style="left:516px;top:657px;width:4px;height:4px;background:#4c4cff"></div>
<div style="left:451px;top:689px;width:4px;height:4px;background:#4c4cff"></div>
<div style="left:453px;top:689px;width:4px;height:4px;background:#4c4cff"></div>
<div style="left:459px;top:689px;width:4px;height:4px;background:#4c4cff"></div>
<div style="left:467px;top:689px;width:4px;height:4px;background:#4c4cff"></div>
<div style="left:478px;top:689px;width:4px;height:4px;background:#4c4cff"></div>
<div style="left:489px;top:689px;width:4px;height:4px;background:#4c4cff"></div>
<div style="left:500px;top:689px;width:4px;height:4px;background:#4c4cff"></div>
<div style="left:508px;top:689px;width:4px;height:4px;background:#4c4cff"></div>
<div style="left:514px;top:689px;width:4px;height:4px;background:#4c4cff"></div>
<div style="left:516px;top:689px;width:4px;height:4px;background:#4c4cff"></div>
<div class="t" style="left:7px;top:90px;font-size:11px;line-height:11px;color:#dcdcdc;letter-spacing:0.6px">Top</div>
<div style="left:27px;top:688px;width:1px;height:25px;background:#00a000"></div>
<div style="left:28px;top:712px;width:24px;height:1px;background:#e00000"></div>
<svg style="position:absolute;left:26px;top:676px;" width="34" height="34" viewBox="0 0 34 34"><path d="M1.5 1V4.5H5.5M5.5 1V7Q5.5 8.5 3 8.5" fill="none" stroke="#00a000" stroke-width="1.2"/><path d="M2 26.5H6L2 31.5H6" fill="none" stroke="#0000e0" stroke-width="1.2"/><path d="M27 26L31 32M31 26L27 32" stroke="#e00000" stroke-width="1.3"/></svg>
<svg style="position:absolute;left:552px;top:271px;" width="15" height="23" viewBox="0 0 15 23"><path d="M1.5 1.5V17.5L5 14L8 21L11.5 19.5L8.5 12.5H13Z" fill="#fff" stroke="#000" stroke-width="1.2" stroke-linejoin="miter"/></svg>
<div style="left:968px;top:85px;width:184px;height:699px;background:#c8c8c8"></div>
<div style="left:1151px;top:85px;width:1px;height:699px;background:#e8e8e8"></div>
<div style="left:970px;top:88px;width:30px;height:24px;background:#c8c8c8;border-top:1px solid #e6e6e6;border-left:1px solid #e6e6e6;border-right:1px solid #707070;box-sizing:border-box;border-radius:2px 2px 0 0"></div>
<div style="left:1000px;top:87px;width:28px;height:26px;background:#c8c8c8;border-top:1px solid #f0f0f0;border-left:1px solid #f0f0f0;border-right:1px solid #6e6e6e;box-sizing:border-box;border-radius:2px 2px 0 0"></div>
<div style="left:1028px;top:88px;width:29px;height:24px;background:#c8c8c8;border-top:1px solid #e6e6e6;border-left:1px solid #e6e6e6;border-right:1px solid #707070;box-sizing:border-box;border-radius:2px 2px 0 0"></div>
<div style="left:1057px;top:88px;width:29px;height:24px;background:#c8c8c8;border-top:1px solid #e6e6e6;border-left:1px solid #e6e6e6;border-right:1px solid #707070;box-sizing:border-box;border-radius:2px 2px 0 0"></div>
<div style="left:1086px;top:88px;width:29px;height:24px;background:#c8c8c8;border-top:1px solid #e6e6e6;border-left:1px solid #e6e6e6;border-right:1px solid #707070;box-sizing:border-box;border-radius:2px 2px 0 0"></div>
<div style="left:1115px;top:88px;width:29px;height:24px;background:#c8c8c8;border-top:1px solid #e6e6e6;border-left:1px solid #e6e6e6;border-right:1px solid #707070;box-sizing:border-box;border-radius:2px 2px 0 0"></div>
<div style="left:968px;top:112px;width:32px;height:1px;background:#e6e6e6"></div>
<div style="left:1028px;top:112px;width:120px;height:1px;background:#e6e6e6"></div>
<svg style="position:absolute;left:974px;top:89px;" width="24" height="24" viewBox="0 0 24 24"><defs><radialGradient id="stg"><stop offset="0" stop-color="#fffff0"/><stop offset=".5" stop-color="#f8f0c0" stop-opacity=".8"/><stop offset="1" stop-color="#f0e8b0" stop-opacity="0"/></radialGradient></defs><circle cx="8.5" cy="7.5" r="6" fill="url(#stg)"/><path d="M8.5 1.5V13.5M2.5 7.5H14.5M4.5 3.5L12.5 11.5M12.5 3.5L4.5 11.5" stroke="#fffbe0" stroke-width=".8" opacity=".8"/><path d="M9.2 7.4L10.8 17.5L13 15.5L15.5 20.5L17.3 19.5L15 14.5L18.2 14Z" fill="#f0f0f4" stroke="#404048" stroke-width="1"/></svg>
<svg style="position:absolute;left:1002px;top:89px;" width="24" height="22" viewBox="0 0 24 22"><defs><linearGradient id="mtg" x1="0" y1="1" x2="1" y2="0"><stop offset="0" stop-color="#303058"/><stop offset=".5" stop-color="#d8d8f8"/><stop offset="1" stop-color="#303058"/></linearGradient></defs><path d="M2.5 2.5H20.5V19.5" fill="none" stroke="#707070" stroke-width=".6"/><rect x="1.5" y="1.5" width="2" height="2" fill="#000"/><rect x="19.5" y="18.5" width="2" height="2" fill="#000"/><path d="M6 19A14 14 0 0 1 20 5" fill="none" stroke="#202040" stroke-width="6.5"/><path d="M6 19A14 14 0 0 1 20 5" fill="none" stroke="#8080b8" stroke-width="4.5"/><path d="M5.5 18A14 14 0 0 1 19 4.5" fill="none" stroke="#e8e8ff" stroke-width="1.2"/><path d="M8.5 19A11.5 11.5 0 0 1 20 7.5" fill="none" stroke="#000" stroke-width="1"/></svg>
<svg style="position:absolute;left:1032px;top:89px;" width="22" height="22" viewBox="0 0 22 22"><defs><linearGradient id="hig" x1="0" y1="0" x2="0" y2="1"><stop offset="0" stop-color="#e8e8f4"/><stop offset="1" stop-color="#ffffff"/></linearGradient></defs><path d="M8.5 9.5L4 15.5M13.5 9.5L18.5 15.5" stroke="#303040" stroke-width="1"/><path d="M11 9V15.5" stroke="#808088" stroke-width="2"/><rect x="7" y="1.5" width="8" height="8" rx="1" fill="url(#hig)" stroke="#3a2a60" stroke-width="1.3"/><rect x="1.5" y="15.5" width="4.5" height="4.5" fill="#f0f0f8" stroke="#3a2a60" stroke-width="1.2"/><rect x="8.5" y="15.5" width="5" height="4.5" fill="#f0f0f8" stroke="#505060" stroke-width="1.2"/><rect x="16" y="15.5" width="4.5" height="4.5" fill="#f0f0f8" stroke="#3a2a60" stroke-width="1.2"/></svg>
<svg style="position:absolute;left:1060px;top:90px;" width="24" height="20" viewBox="0 0 24 20"><circle cx="14.3" cy="10" r="6.6" fill="#e4e4e8" stroke="#111" stroke-width="1.8"/><path d="M14.3 4V16M8.3 10H20.3M10 5.8L18.6 14.2M18.6 5.8L10 14.2" stroke="#6070a0" stroke-width=".7"/><path d="M12 8L16.5 12M16.5 8L12 12M14.3 7.5V12.5" stroke="#e02020" stroke-width=".9"/><path d="M5.5 3Q2.5 10 5.5 17M3.5 4Q1 10 3.5 16M7.3 4.5Q5 10 7.3 15.5" fill="none" stroke="#404040" stroke-width=".7"/></svg>
<svg style="position:absolute;left:1091px;top:90px;" width="20" height="19" viewBox="0 0 20 19"><rect x="1" y="1" width="18" height="14" rx="1.5" fill="#444" /><rect x="3" y="3" width="14" height="10" fill="#fff"/><rect x="5" y="4" width="3" height="8" fill="#6070c0"/><path d="M10 12L13 4L16 12Z" fill="#e02020"/><rect x="5" y="16" width="10" height="2" fill="#555"/><rect x="9" y="16" width="2" height="1" fill="#30c030"/></svg>
<svg style="position:absolute;left:1121px;top:90px;" width="18" height="20" viewBox="0 0 18 20"><path d="M2 3Q6 0 12 1L16 4L14 5L11 3V4H7L5 4Q3 4 2 5Z" fill="#505050" stroke="#222" stroke-width=".5"/><rect x="7" y="4" width="3" height="13" fill="#c03020" stroke="#222" stroke-width=".6"/><path d="M7 13H10V19H7Z" fill="#222"/></svg>
<div style="left:976px;top:118px;width:147px;height:20px;background:#e4e4e4;box-sizing:border-box;border:1px solid;border-color:#6e6e6e #f4f4f4 #f4f4f4 #6e6e6e;box-shadow:inset 1px 1px 0 #000, inset -1px -1px 0 #d8d8d8"></div>
<div class="t" style="left:980px;top:123px;font-size:11px;line-height:11px;color:#000;">Cylinder02</div>
<div style="left:1126px;top:118px;width:17px;height:20px;background:#e89ad6;box-sizing:border-box;border:1px solid;border-color:#707070 #f0f0f0 #f0f0f0 #707070"></div>
<div style="left:977px;top:143px;width:167px;height:24px;background:#e6e6e6;box-sizing:border-box;border-style:solid;border-width:2px 1px 1px 2px;border-color:#585e66 #dcdcdc #dcdcdc #585e66"></div>
<div style="left:1126px;top:145px;width:17px;height:20px;background:#ece9d8;box-sizing:border-box;border:1px solid;border-color:#fff #7a7468 #7a7468 #fff"></div>
<svg style="position:absolute;left:1130px;top:153px;" width="8" height="4" viewBox="0 0 8 4"><path d="M0 0H8L4 4Z" fill="#000"/></svg>
<div class="t" style="left:981px;top:150px;font-size:11px;line-height:11px;color:#000;">Modifier List</div>
<div style="left:977px;top:171px;width:165px;height:127px;background:#e4e4e4;box-sizing:border-box;border:1px solid;border-color:#6e6e6e #f4f4f4 #f4f4f4 #6e6e6e;box-shadow:inset 1px 1px 0 #000, inset -1px -1px 0 #d8d8d8"></div>
<div style="left:979px;top:173px;width:161px;height:16px;background:#ffff00"></div>
<div style="left:985px;top:176px;width:9px;height:9px;background:#000"></div>
<div style="left:987px;top:180px;width:5px;height:1px;background:#fff"></div>
<div style="left:989px;top:178px;width:1px;height:5px;background:#fff"></div>
<div class="t" style="left:1001px;top:176px;font-size:11px;line-height:11px;color:#000;">Editable Poly</div>
<svg style="position:absolute;left:1118px;top:173px;" width="20" height="16" viewBox="0 0 20 16"><rect x="12" y="2" width="3" height="1" fill="#000"/><rect x="13" y="1" width="1" height="3" fill="#000"/><rect x="5" y="9" width="3" height="1" fill="#000"/><rect x="6" y="8" width="1" height="3" fill="#000"/><rect x="10" y="12" width="3" height="1" fill="#000"/><rect x="11" y="11" width="1" height="3" fill="#000"/></svg>
<svg style="position:absolute;left:983px;top:306px;" width="18" height="14" viewBox="0 0 18 14"><path d="M1 7H8" stroke="#000" stroke-width="1.4"/><path d="M7.5 2L10 3H14.5L16.5 2V12L14.5 11H10L7.5 12Z" fill="#000"/><path d="M10 4.5H14.5V9.5H10Z" fill="#f0f0f0"/><circle cx="12.2" cy="7" r="1.4" fill="#555"/></svg>
<div style="left:1010px;top:305px;width:1px;height:16px;background:#7a7a7a"></div>
<div style="left:1011px;top:305px;width:1px;height:16px;background:#f0f0f0"></div>
<svg style="position:absolute;left:1022px;top:305px;" width="12" height="16" viewBox="0 0 12 16"><rect x="3" y="2" width="6" height="7" fill="#9a9a9a"/><path d="M3 3h1M5 3h1M7 3h1M4 4h1M6 4h1M3 5h1M5 5h1M7 5h1M4 6h1M6 6h1M3 7h1M5 7h1M7 7h1" stroke="#e0e0e0" stroke-width="1"/><rect x="3" y="9" width="6" height="6" fill="#fff"/><path d="M2.5 15V3Q2.5 1.5 1.5 1.5M9.5 15V3Q9.5 1.5 10.5 1.5" fill="none" stroke="#000" stroke-width="1.4"/></svg>
<div style="left:1046px;top:305px;width:1px;height:16px;background:#7a7a7a"></div>
<div style="left:1047px;top:305px;width:1px;height:16px;background:#f0f0f0"></div>
<svg style="position:absolute;left:1056px;top:306px;" width="17" height="15" viewBox="0 0 17 15"><path d="M2 2L7 11M15 2L10 11" stroke="#f0f0f0" stroke-width="1.5" stroke-dasharray="1.5 1"/><path d="M1.5 1L6.5 10M14.5 1L9.5 10" stroke="#a0a0a0" stroke-width="1" stroke-dasharray="1.5 1"/><circle cx="8.5" cy="11.5" r="2.6" fill="none" stroke="#f0f0f0" stroke-width="1.3"/><circle cx="8" cy="11" r="2.6" fill="none" stroke="#9a9a9a" stroke-width="1"/></svg>
<svg style="position:absolute;left:1082px;top:306px;" width="12" height="16" viewBox="0 0 12 16"><path d="M2.5 5.5V12Q2.5 14.5 6 14.5Q9.5 14.5 9.5 12V5.5" fill="none" stroke="#f4f4f4" stroke-width="1.6"/><path d="M2 5V11.5Q2 14 5.5 14Q9 14 9 11.5V5" fill="none" stroke="#9a9a9a" stroke-width="1"/><ellipse cx="5.5" cy="5" rx="3.5" ry="2" fill="none" stroke="#9a9a9a"/><path d="M3.5 2.5Q5.5 0.5 8 2" fill="none" stroke="#a0a0a0"/></svg>
<div style="left:1106px;top:305px;width:1px;height:16px;background:#7a7a7a"></div>
<div style="left:1107px;top:305px;width:1px;height:16px;background:#f0f0f0"></div>
<svg style="position:absolute;left:1116px;top:306px;" width="17" height="15" viewBox="0 0 17 15"><rect x=".5" y=".5" width="12.5" height="13" fill="#e8e8e8" stroke="#0000a0"/><rect x="1" y="1" width="12" height="2.5" fill="#0000b0"/><rect x="2" y="4.5" width="10" height="8" fill="#d0d0d0"/><path d="M6 7.5q1-1.5 2 0v2M6 11h2M11 7.5q1-1.5 2 0v2M11 12.5h3M7 12.5h2" fill="none" stroke="#000" stroke-width="1.2"/></svg>
<div style="left:972px;top:335px;width:175px;height:1px;background:#f0f0f0"></div>
<div style="left:972px;top:336px;width:175px;height:2px;background:#000"></div>
<div style="left:972px;top:346px;width:170px;height:1px;background:#6e6e6e"></div>
<div style="left:972px;top:346px;width:1px;height:431px;background:#6e6e6e"></div>
<div style="left:973px;top:347px;width:169px;height:1px;background:#e0e0e0"></div>
<div style="left:973px;top:347px;width:1px;height:430px;background:#e0e0e0"></div>
<div style="left:972px;top:777px;width:175px;height:1px;background:#f0f0f0"></div>
<div style="left:1142px;top:346px;width:4px;height:87px;background:#6e6e6e"></div>
<div style="left:1142px;top:433px;width:4px;height:344px;background:#000"></div>
<div style="left:1146px;top:346px;width:1px;height:432px;background:#f0f0f0"></div>
<div style="left:975px;top:359px;width:4px;height:1px;background:#6e6e6e"></div>
<div style="left:976px;top:360px;width:3px;height:1px;background:#f0f0f0"></div>
<div style="left:975px;top:359px;width:1px;height:164px;background:#6e6e6e"></div>
<div style="left:976px;top:360px;width:1px;height:163px;background:#f0f0f0"></div>
<div style="left:1137px;top:359px;width:3px;height:1px;background:#6e6e6e"></div>
<div style="left:1139px;top:359px;width:1px;height:164px;background:#6e6e6e"></div>
<div style="left:1140px;top:359px;width:1px;height:165px;background:#f0f0f0"></div>
<div style="left:975px;top:523px;width:165px;height:1px;background:#6e6e6e"></div>
<div style="left:975px;top:524px;width:166px;height:1px;background:#f0f0f0"></div>
<div style="left:979px;top:351px;width:158px;height:16px;background-color:#b2b2b2;box-sizing:border-box;border:1px solid #000;background-image:linear-gradient(45deg,rgba(255,255,255,.14) 25%,transparent 25% 75%,rgba(255,255,255,.14) 75%),linear-gradient(45deg,rgba(255,255,255,.14) 25%,transparent 25% 75%,rgba(255,255,255,.14) 75%);background-size:2px 2px;background-position:0 0,1px 1px"></div>
<div class="t" style="left:985px;top:354px;font-size:11px;line-height:11px;color:#000;">-</div>
<div class="t" style="left:979px;top:353px;width:158px;text-align:center;font-size:11px;line-height:11px">Selection</div>
<div style="left:995px;top:370px;width:24px;height:23px;background:#ffff00;box-sizing:border-box;border:1px solid;border-color:#6e6e6e #f0f0f0 #f0f0f0 #6e6e6e"></div>
<svg style="position:absolute;left:995px;top:370px;" width="25" height="23" viewBox="0 0 25 23"><path d="M7 12h3M8.5 10.5v3M13 15h3M14.5 13.5v3M16 5h3M17.5 3.5v3" stroke="#e00000" stroke-width="1.2"/></svg>
<svg style="position:absolute;left:1023px;top:374px;" width="19" height="14" viewBox="0 0 19 14"><path d="M18 1L1 10L12 13Z" fill="none" stroke="#e00000" stroke-width="1.2"/></svg>
<svg style="position:absolute;left:1048px;top:372px;" width="12" height="18" viewBox="0 0 12 18"><path d="M5 1Q11 0 11 8Q11 17 5 16Q1 15 4 11Q6 8 3 5Q1 2 5 1Z" fill="none" stroke="#e00000" stroke-width="1.2"/></svg>
<div style="left:1073px;top:375px;width:12px;height:12px;background:#f00000;border:1px solid #000;box-sizing:border-box"></div>
<svg style="position:absolute;left:1095px;top:374px;" width="16" height="14" viewBox="0 0 16 14"><path d="M1 4H10V13H1Z" fill="#f00000" stroke="#000"/><path d="M1 4L4 1H13L10 4Z" fill="#f00000" stroke="#000"/><path d="M10 4L13 1V10L10 13Z" fill="#8000a0" stroke="#000"/></svg>
<div style="left:986px;top:399px;width:13px;height:13px;box-sizing:border-box;border:1px solid;border-color:#6e6e6e #f0f0f0 #f0f0f0 #6e6e6e;background:#c8c8c8;box-shadow:inset 1px 1px 0 #505050"></div>
<div class="t" style="left:1004px;top:401px;font-size:11px;line-height:11px;color:#7a7a7a;">By Vertex</div>
<div style="left:986px;top:418px;width:13px;height:13px;box-sizing:border-box;border:1px solid;border-color:#6e6e6e #f0f0f0 #f0f0f0 #6e6e6e;background:#e4e4e4;box-shadow:inset 1px 1px 0 #505050"></div>
<div class="t" style="left:1004px;top:420px;font-size:11px;line-height:11px;color:#000;">Ignore Backfacing</div>
<div style="left:986px;top:438px;width:13px;height:13px;box-sizing:border-box;border:1px solid;border-color:#6e6e6e #f0f0f0 #f0f0f0 #6e6e6e;background:#c8c8c8;box-shadow:inset 1px 1px 0 #505050"></div>
<div class="t" style="left:1004px;top:440px;font-size:11px;line-height:11px;color:#7a7a7a;">By Angle:</div>
<div style="left:1052px;top:437px;width:68px;height:16px;background:#e4e4e4;box-sizing:border-box;border:1px solid;border-color:#6e6e6e #f4f4f4 #f4f4f4 #6e6e6e;box-shadow:inset 1px 1px 0 #000, inset -1px -1px 0 #d8d8d8"></div>
<div class="t" style="left:1056px;top:440px;font-size:11px;line-height:11px;color:#7a7a7a;">45.0</div>
<div style="left:1121px;top:437px;width:11px;height:8px;background:#c8c8c8;box-sizing:border-box;border:1px solid;border-color:#f0f0f0 #6e6e6e #6e6e6e #f0f0f0"></div>
<div style="left:1121px;top:445px;width:11px;height:8px;background:#c8c8c8;box-sizing:border-box;border:1px solid;border-color:#f0f0f0 #6e6e6e #6e6e6e #f0f0f0"></div>
<svg style="position:absolute;left:1121px;top:437px;" width="11" height="16" viewBox="0 0 11 16"><path d="M2.5 6L5.5 3L8.5 6Z M2.5 10L5.5 13L8.5 10Z" fill="#000"/></svg>
<div style="left:983px;top:461px;width:73px;height:19px;background:#c8c8c8;box-sizing:border-box;border:1px solid;border-color:#f0f0f0 #6e6e6e #6e6e6e #f0f0f0"></div>
<div class="t" style="left:983px;top:465px;width:73px;text-align:center;font-size:11px;line-height:11px;color:#000">Shrink</div>
<div style="left:1060px;top:461px;width:72px;height:19px;background:#c8c8c8;box-sizing:border-box;border:1px solid;border-color:#f0f0f0 #6e6e6e #6e6e6e #f0f0f0"></div>
<div class="t" style="left:1060px;top:465px;width:72px;text-align:center;font-size:11px;line-height:11px;color:#000">Grow</div>
<div style="left:983px;top:484px;width:73px;height:18px;background:#c8c8c8;box-sizing:border-box;border:1px solid;border-color:#f0f0f0 #6e6e6e #6e6e6e #f0f0f0"></div>
<div class="t" style="left:983px;top:487px;width:73px;text-align:center;font-size:11px;line-height:11px;color:#808080">Ring</div>
<div style="left:1060px;top:484px;width:72px;height:18px;background:#c8c8c8;box-sizing:border-box;border:1px solid;border-color:#f0f0f0 #6e6e6e #6e6e6e #f0f0f0"></div>
<div class="t" style="left:1060px;top:487px;width:72px;text-align:center;font-size:11px;line-height:11px;color:#808080">Loop</div>
<div class="t" style="left:1036px;top:507px;font-size:11px;line-height:11px;color:#000;">0 Vertices Selected</div>
<div style="left:975px;top:538px;width:4px;height:1px;background:#6e6e6e"></div>
<div style="left:975px;top:538px;width:1px;height:5px;background:#6e6e6e"></div>
<div style="left:976px;top:539px;width:1px;height:4px;background:#f0f0f0"></div>
<div style="left:1137px;top:538px;width:3px;height:1px;background:#6e6e6e"></div>
<div style="left:1139px;top:538px;width:1px;height:5px;background:#6e6e6e"></div>
<div style="left:1140px;top:539px;width:1px;height:4px;background:#f0f0f0"></div>
<div style="left:979px;top:531px;width:158px;height:16px;background-color:#b2b2b2;box-sizing:border-box;border:1px solid #000;background-image:linear-gradient(45deg,rgba(255,255,255,.14) 25%,transparent 25% 75%,rgba(255,255,255,.14) 75%),linear-gradient(45deg,rgba(255,255,255,.14) 25%,transparent 25% 75%,rgba(255,255,255,.14) 75%);background-size:2px 2px;background-position:0 0,1px 1px"></div>
<div class="t" style="left:984px;top:534px;font-size:11px;line-height:11px;color:#000;font-weight:bold">+</div>
<div class="t" style="left:979px;top:533px;width:158px;text-align:center;font-size:11px;line-height:11px">Soft Selection</div>
<div style="left:975px;top:559px;width:4px;height:1px;background:#6e6e6e"></div>
<div style="left:976px;top:560px;width:3px;height:1px;background:#f0f0f0"></div>
<div style="left:975px;top:559px;width:1px;height:187px;background:#6e6e6e"></div>
<div style="left:976px;top:560px;width:1px;height:186px;background:#f0f0f0"></div>
<div style="left:1137px;top:559px;width:3px;height:1px;background:#6e6e6e"></div>
<div style="left:1139px;top:559px;width:1px;height:187px;background:#6e6e6e"></div>
<div style="left:1140px;top:559px;width:1px;height:188px;background:#f0f0f0"></div>
<div style="left:975px;top:746px;width:165px;height:1px;background:#6e6e6e"></div>
<div style="left:975px;top:747px;width:166px;height:1px;background:#f0f0f0"></div>
<div style="left:979px;top:551px;width:158px;height:16px;background-color:#b2b2b2;box-sizing:border-box;border:1px solid #000;background-image:linear-gradient(45deg,rgba(255,255,255,.14) 25%,transparent 25% 75%,rgba(255,255,255,.14) 75%),linear-gradient(45deg,rgba(255,255,255,.14) 25%,transparent 25% 75%,rgba(255,255,255,.14) 75%);background-size:2px 2px;background-position:0 0,1px 1px"></div>
<div class="t" style="left:985px;top:554px;font-size:11px;line-height:11px;color:#000;">-</div>
<div class="t" style="left:979px;top:553px;width:158px;text-align:center;font-size:11px;line-height:11px">Edit Vertices</div>
<div style="left:983px;top:574px;width:73px;height:18px;background:#c8c8c8;box-sizing:border-box;border:1px solid;border-color:#f0f0f0 #6e6e6e #6e6e6e #f0f0f0"></div>
<div class="t" style="left:983px;top:577px;width:73px;text-align:center;font-size:11px;line-height:11px;color:#000">Remove</div>
<div style="left:1060px;top:574px;width:72px;height:18px;background:#c8c8c8;box-sizing:border-box;border:1px solid;border-color:#f0f0f0 #6e6e6e #6e6e6e #f0f0f0"></div>
<div class="t" style="left:1060px;top:577px;width:72px;text-align:center;font-size:11px;line-height:11px;color:#000">Break</div>
<div style="left:983px;top:596px;width:57px;height:18px;background:#c8c8c8;box-sizing:border-box;border:1px solid;border-color:#f0f0f0 #6e6e6e #6e6e6e #f0f0f0"></div>
<div class="t" style="left:983px;top:599px;width:57px;text-align:center;font-size:11px;line-height:11px;color:#000">Extrude</div>
<div style="left:1041px;top:596px;width:15px;height:18px;background:#c8c8c8;box-sizing:border-box;border:1px solid;border-color:#f0f0f0 #6e6e6e #6e6e6e #f0f0f0"></div>
<svg style="position:absolute;left:1041px;top:596px;" width="15" height="18" viewBox="0 0 15 18"><rect x="3" y="4" width="9" height="9" fill="none" stroke="#000" stroke-width="1"/><rect x="3" y="4" width="9" height="2" fill="#000"/></svg>
<div style="left:1060px;top:596px;width:57px;height:18px;background:#c8c8c8;box-sizing:border-box;border:1px solid;border-color:#f0f0f0 #6e6e6e #6e6e6e #f0f0f0"></div>
<div class="t" style="left:1060px;top:599px;width:57px;text-align:center;font-size:11px;line-height:11px;color:#000">Weld</div>
<div style="left:1117px;top:596px;width:15px;height:18px;background:#c8c8c8;box-sizing:border-box;border:1px solid;border-color:#f0f0f0 #6e6e6e #6e6e6e #f0f0f0"></div>
<svg style="position:absolute;left:1117px;top:596px;" width="15" height="18" viewBox="0 0 15 18"><rect x="3" y="4" width="9" height="9" fill="none" stroke="#000" stroke-width="1"/><rect x="3" y="4" width="9" height="2" fill="#000"/></svg>
<div style="left:983px;top:619px;width:57px;height:18px;background:#c8c8c8;box-sizing:border-box;border:1px solid;border-color:#f0f0f0 #6e6e6e #6e6e6e #f0f0f0"></div>
<div class="t" style="left:983px;top:622px;width:57px;text-align:center;font-size:11px;line-height:11px;color:#000">Chamfer</div>
<div style="left:1041px;top:619px;width:15px;height:18px;background:#c8c8c8;box-sizing:border-box;border:1px solid;border-color:#f0f0f0 #6e6e6e #6e6e6e #f0f0f0"></div>
<svg style="position:absolute;left:1041px;top:619px;" width="15" height="18" viewBox="0 0 15 18"><rect x="3" y="4" width="9" height="9" fill="none" stroke="#000" stroke-width="1"/><rect x="3" y="4" width="9" height="2" fill="#000"/></svg>
<div style="left:1060px;top:619px;width:72px;height:18px;background:#c8c8c8;box-sizing:border-box;border:1px solid;border-color:#f0f0f0 #6e6e6e #6e6e6e #f0f0f0"></div>
<div class="t" style="left:1060px;top:622px;width:72px;text-align:center;font-size:11px;line-height:11px;color:#000">Target Weld</div>
<div style="left:1021px;top:642px;width:72px;height:18px;background:#c8c8c8;box-sizing:border-box;border:1px solid;border-color:#f0f0f0 #6e6e6e #6e6e6e #f0f0f0"></div>
<div class="t" style="left:1021px;top:645px;width:72px;text-align:center;font-size:11px;line-height:11px;color:#000">Connect</div>
<div style="left:983px;top:665px;width:149px;height:18px;background:#c8c8c8;box-sizing:border-box;border:1px solid;border-color:#f0f0f0 #6e6e6e #6e6e6e #f0f0f0"></div>
<div class="t" style="left:983px;top:668px;width:149px;text-align:center;font-size:11px;line-height:11px;color:#000">Remove Isolated Vertices</div>
<div style="left:983px;top:687px;width:149px;height:18px;background:#c8c8c8;box-sizing:border-box;border:1px solid;border-color:#f0f0f0 #6e6e6e #6e6e6e #f0f0f0"></div>
<div class="t" style="left:983px;top:690px;width:149px;text-align:center;font-size:11px;line-height:11px;color:#000">Remove Unused Map Verts</div>
<div style="left:982px;top:711px;width:152px;height:31px;box-sizing:border-box;border:1px solid;border-color:#6e6e6e #f0f0f0 #f0f0f0 #6e6e6e;box-shadow:inset 1px 1px 0 #f0f0f0, inset -1px -1px 0 #6e6e6e"></div>
<div class="t" style="left:996px;top:720px;font-size:11px;line-height:11px;color:#000;">Weight:</div>
<div style="left:1040px;top:718px;width:57px;height:16px;background:#e4e4e4;box-sizing:border-box;border:1px solid;border-color:#6e6e6e #f4f4f4 #f4f4f4 #6e6e6e;box-shadow:inset 1px 1px 0 #000, inset -1px -1px 0 #d8d8d8"></div>
<div style="left:1101px;top:718px;width:11px;height:8px;background:#c8c8c8;box-sizing:border-box;border:1px solid;border-color:#f0f0f0 #6e6e6e #6e6e6e #f0f0f0"></div>
<div style="left:1101px;top:726px;width:11px;height:8px;background:#c8c8c8;box-sizing:border-box;border:1px solid;border-color:#f0f0f0 #6e6e6e #6e6e6e #f0f0f0"></div>
<svg style="position:absolute;left:1101px;top:718px;" width="11" height="16" viewBox="0 0 11 16"><path d="M2.5 6L5.5 3L8.5 6Z M2.5 10L5.5 13L8.5 10Z" fill="#000"/></svg>
<div style="left:975px;top:762px;width:4px;height:1px;background:#6e6e6e"></div>
<div style="left:975px;top:762px;width:1px;height:15px;background:#6e6e6e"></div>
<div style="left:976px;top:763px;width:1px;height:14px;background:#f0f0f0"></div>
<div style="left:1137px;top:762px;width:3px;height:1px;background:#6e6e6e"></div>
<div style="left:1139px;top:762px;width:1px;height:15px;background:#6e6e6e"></div>
<div style="left:1140px;top:763px;width:1px;height:14px;background:#f0f0f0"></div>
<div style="left:983px;top:775px;width:149px;height:1px;background:#f0f0f0"></div>
<div style="left:979px;top:754px;width:158px;height:16px;background-color:#b2b2b2;box-sizing:border-box;border:1px solid #000;background-image:linear-gradient(45deg,rgba(255,255,255,.14) 25%,transparent 25% 75%,rgba(255,255,255,.14) 75%),linear-gradient(45deg,rgba(255,255,255,.14) 25%,transparent 25% 75%,rgba(255,255,255,.14) 75%);background-size:2px 2px;background-position:0 0,1px 1px"></div>
<div class="t" style="left:985px;top:757px;font-size:11px;line-height:11px;color:#000;">-</div>
<div class="t" style="left:979px;top:756px;width:158px;text-align:center;font-size:11px;line-height:11px">Edit Geometry</div>
<div style="left:968px;top:783px;width:183px;height:1px;background:#6e6e6e"></div>
<div style="left:0px;top:739px;width:968px;height:45px;background:#c8c8c8"></div>
<div style="left:0px;top:784px;width:968px;height:48px;background:#c8c8c8"></div>
<div style="left:16px;top:739px;width:952px;height:17px;background-color:#bfbfbf;background-image:radial-gradient(circle,#d2d2d2 0 0.9px,transparent 1px),radial-gradient(circle,#cccccc 0 0.8px,transparent 0.9px);background-size:4px 4px,4px 4px;background-position:0 0,2px 2px"></div>
<div style="left:0px;top:739px;width:16px;height:17px;background:#c8c8c8;box-sizing:border-box;border:1px solid;border-color:#f0f0f0 #404040 #404040 #f0f0f0"></div>
<svg style="position:absolute;left:4px;top:744px;" width="8" height="8" viewBox="0 0 8 8"><path d="M6 0.5L2 4L6 7.5" fill="none" stroke="#000" stroke-width="1.1"/></svg>
<div style="left:16px;top:739px;width:125px;height:17px;background:#c8c8c8;box-sizing:border-box;border-top:1px solid #f0f0f0;border-left:1px solid #f0f0f0;border-bottom:2px solid #000;border-right:2px solid #000"></div>
<div class="t" style="left:62px;top:742px;font-size:11px;line-height:11px;color:#000;letter-spacing:0.4px">0 / 100</div>
<div style="left:141px;top:739px;width:16px;height:17px;background:#c8c8c8;box-sizing:border-box;border:1px solid;border-color:#f0f0f0 #404040 #404040 #f0f0f0"></div>
<svg style="position:absolute;left:145px;top:744px;" width="8" height="8" viewBox="0 0 8 8"><path d="M2 0.5L6 4L2 7.5" fill="none" stroke="#000" stroke-width="1.1"/></svg>
<div style="left:16px;top:756px;width:952px;height:1px;background:#f0f0f0"></div>
<div style="left:0px;top:757px;width:968px;height:1px;background:#f0f0f0"></div>
<div style="left:50px;top:758px;width:868px;height:26px;background-color:#c4c4c6;background-image:repeating-linear-gradient(45deg,#d8d8d8 0 1px,transparent 1px 2.8px),repeating-linear-gradient(-45deg,rgba(216,216,216,.5) 0 1px,transparent 1px 2.8px)"></div>
<div style="left:50px;top:758px;width:868px;height:1px;background:#707070"></div>
<div style="left:50px;top:783px;width:868px;height:1px;background:#e8e8e8"></div>
<svg style="position:absolute;left:0px;top:758px;" width="968" height="26" viewBox="0 0 968 26"><rect x="54" y="0" width="1" height="0" fill="#707078"/><rect x="63" y="1" width="1" height="11" fill="#707078"/><rect x="71" y="1" width="1" height="11" fill="#707078"/><rect x="80" y="1" width="1" height="11" fill="#707078"/><rect x="88" y="1" width="1" height="11" fill="#707078"/><rect x="97" y="1" width="1" height="11" fill="#707078"/><rect x="106" y="1" width="1" height="11" fill="#707078"/><rect x="114" y="1" width="1" height="11" fill="#707078"/><rect x="123" y="1" width="1" height="11" fill="#707078"/><rect x="131" y="1" width="1" height="11" fill="#707078"/><rect x="140" y="0" width="1" height="26" fill="#707078"/><rect x="149" y="1" width="1" height="11" fill="#707078"/><rect x="157" y="1" width="1" height="11" fill="#707078"/><rect x="166" y="1" width="1" height="11" fill="#707078"/><rect x="174" y="1" width="1" height="11" fill="#707078"/><rect x="183" y="1" width="1" height="11" fill="#707078"/><rect x="192" y="1" width="1" height="11" fill="#707078"/><rect x="200" y="1" width="1" height="11" fill="#707078"/><rect x="209" y="1" width="1" height="11" fill="#707078"/><rect x="218" y="1" width="1" height="11" fill="#707078"/><rect x="226" y="0" width="1" height="26" fill="#707078"/><rect x="235" y="1" width="1" height="11" fill="#707078"/><rect x="243" y="1" width="1" height="11" fill="#707078"/><rect x="252" y="1" width="1" height="11" fill="#707078"/><rect x="261" y="1" width="1" height="11" fill="#707078"/><rect x="269" y="1" width="1" height="11" fill="#707078"/><rect x="278" y="1" width="1" height="11" fill="#707078"/><rect x="286" y="1" width="1" height="11" fill="#707078"/><rect x="295" y="1" width="1" height="11" fill="#707078"/><rect x="304" y="1" width="1" height="11" fill="#707078"/><rect x="312" y="0" width="1" height="26" fill="#707078"/><rect x="321" y="1" width="1" height="11" fill="#707078"/><rect x="329" y="1" width="1" height="11" fill="#707078"/><rect x="338" y="1" width="1" height="11" fill="#707078"/><rect x="347" y="1" width="1" height="11" fill="#707078"/><rect x="355" y="1" width="1" height="11" fill="#707078"/><rect x="364" y="1" width="1" height="11" fill="#707078"/><rect x="372" y="1" width="1" height="11" fill="#707078"/><rect x="381" y="1" width="1" height="11" fill="#707078"/><rect x="390" y="1" width="1" height="11" fill="#707078"/><rect x="398" y="0" width="1" height="26" fill="#707078"/><rect x="407" y="1" width="1" height="11" fill="#707078"/><rect x="415" y="1" width="1" height="11" fill="#707078"/><rect x="424" y="1" width="1" height="11" fill="#707078"/><rect x="433" y="1" width="1" height="11" fill="#707078"/><rect x="441" y="1" width="1" height="11" fill="#707078"/><rect x="450" y="1" width="1" height="11" fill="#707078"/><rect x="458" y="1" width="1" height="11" fill="#707078"/><rect x="467" y="1" width="1" height="11" fill="#707078"/><rect x="476" y="1" width="1" height="11" fill="#707078"/><rect x="484" y="0" width="1" height="26" fill="#707078"/><rect x="493" y="1" width="1" height="11" fill="#707078"/><rect x="502" y="1" width="1" height="11" fill="#707078"/><rect x="510" y="1" width="1" height="11" fill="#707078"/><rect x="519" y="1" width="1" height="11" fill="#707078"/><rect x="527" y="1" width="1" height="11" fill="#707078"/><rect x="536" y="1" width="1" height="11" fill="#707078"/><rect x="545" y="1" width="1" height="11" fill="#707078"/><rect x="553" y="1" width="1" height="11" fill="#707078"/><rect x="562" y="1" width="1" height="11" fill="#707078"/><rect x="570" y="0" width="1" height="26" fill="#707078"/><rect x="579" y="1" width="1" height="11" fill="#707078"/><rect x="588" y="1" width="1" height="11" fill="#707078"/><rect x="596" y="1" width="1" height="11" fill="#707078"/><rect x="605" y="1" width="1" height="11" fill="#707078"/><rect x="613" y="1" width="1" height="11" fill="#707078"/><rect x="622" y="1" width="1" height="11" fill="#707078"/><rect x="631" y="1" width="1" height="11" fill="#707078"/><rect x="639" y="1" width="1" height="11" fill="#707078"/><rect x="648" y="1" width="1" height="11" fill="#707078"/><rect x="656" y="0" width="1" height="26" fill="#707078"/><rect x="665" y="1" width="1" height="11" fill="#707078"/><rect x="674" y="1" width="1" height="11" fill="#707078"/><rect x="682" y="1" width="1" height="11" fill="#707078"/><rect x="691" y="1" width="1" height="11" fill="#707078"/><rect x="699" y="1" width="1" height="11" fill="#707078"/><rect x="708" y="1" width="1" height="11" fill="#707078"/><rect x="717" y="1" width="1" height="11" fill="#707078"/><rect x="725" y="1" width="1" height="11" fill="#707078"/><rect x="734" y="1" width="1" height="11" fill="#707078"/><rect x="742" y="0" width="1" height="26" fill="#707078"/><rect x="751" y="1" width="1" height="11" fill="#707078"/><rect x="760" y="1" width="1" height="11" fill="#707078"/><rect x="768" y="1" width="1" height="11" fill="#707078"/><rect x="777" y="1" width="1" height="11" fill="#707078"/><rect x="786" y="1" width="1" height="11" fill="#707078"/><rect x="794" y="1" width="1" height="11" fill="#707078"/><rect x="803" y="1" width="1" height="11" fill="#707078"/><rect x="811" y="1" width="1" height="11" fill="#707078"/><rect x="820" y="1" width="1" height="11" fill="#707078"/><rect x="829" y="0" width="1" height="26" fill="#707078"/><rect x="837" y="1" width="1" height="11" fill="#707078"/><rect x="846" y="1" width="1" height="11" fill="#707078"/><rect x="854" y="1" width="1" height="11" fill="#707078"/><rect x="863" y="1" width="1" height="11" fill="#707078"/><rect x="872" y="1" width="1" height="11" fill="#707078"/><rect x="880" y="1" width="1" height="11" fill="#707078"/><rect x="889" y="1" width="1" height="11" fill="#707078"/><rect x="897" y="1" width="1" height="11" fill="#707078"/><rect x="906" y="1" width="1" height="11" fill="#707078"/><rect x="915" y="0" width="1" height="26" fill="#707078"/></svg>
<div class="t" style="left:134px;top:772px;width:12px;text-align:center;font-size:11px;line-height:11px;background:#c8c8c8;background:transparent">10</div>
<div class="t" style="left:220px;top:772px;width:12px;text-align:center;font-size:11px;line-height:11px;background:#c8c8c8;background:transparent">20</div>
<div class="t" style="left:306px;top:772px;width:12px;text-align:center;font-size:11px;line-height:11px;background:#c8c8c8;background:transparent">30</div>
<div class="t" style="left:392px;top:772px;width:12px;text-align:center;font-size:11px;line-height:11px;background:#c8c8c8;background:transparent">40</div>
<div class="t" style="left:478px;top:772px;width:12px;text-align:center;font-size:11px;line-height:11px;background:#c8c8c8;background:transparent">50</div>
<div class="t" style="left:564px;top:772px;width:12px;text-align:center;font-size:11px;line-height:11px;background:#c8c8c8;background:transparent">60</div>
<div class="t" style="left:650px;top:772px;width:12px;text-align:center;font-size:11px;line-height:11px;background:#c8c8c8;background:transparent">70</div>
<div class="t" style="left:736px;top:772px;width:12px;text-align:center;font-size:11px;line-height:11px;background:#c8c8c8;background:transparent">80</div>
<div class="t" style="left:823px;top:772px;width:12px;text-align:center;font-size:11px;line-height:11px;background:#c8c8c8;background:transparent">90</div>
<div class="t" style="left:906px;top:772px;width:18px;text-align:center;font-size:11px;line-height:11px;background:#c8c8c8;background:transparent">100</div>
<div style="left:50px;top:758px;width:9px;height:26px;background:#8aaccc;box-sizing:border-box;border:1px solid #607890"></div>
<div style="left:54px;top:758px;width:1px;height:26px;background:#607890"></div>
<div class="t" style="left:51px;top:772px;font-size:11px;line-height:11px;color:#203040;">0</div>
<svg style="position:absolute;left:13px;top:762px;" width="18" height="17" viewBox="0 0 18 17"><rect x="1" y="1" width="16" height="5" fill="none" stroke="#000" stroke-width="1.6"/><path d="M3 4Q5 2 7 4T11 4T15 4" fill="none" stroke="#000" stroke-width=".8"/><path d="M4.5 13V8M2.5 10L4.5 8L6.5 10M13 8V13M11 11L13 13L15 11" fill="none" stroke="#000" stroke-width="1.2"/><rect x="1" y="14" width="16" height="3" fill="#000"/><rect x="3" y="15" width="5" height="1" fill="#fff"/><rect x="10" y="15" width="5" height="1" fill="#fff"/></svg>
<div style="left:0px;top:784px;width:968px;height:1px;background:#c8c8c8"></div>
<div style="left:2px;top:786px;width:96px;height:22px;background:#dcc8c8;box-sizing:border-box;border:1px solid;border-color:#808078 #f8f8f0 #f8f8f0 #808078;box-shadow:inset 1px 1px 0 #b0b0a8"></div>
<div style="left:2px;top:810px;width:96px;height:22px;background:#fff;box-sizing:border-box;border:1px solid;border-color:#808078 #f8f8f0 #f8f8f0 #808078;box-shadow:inset 1px 1px 0 #b0b0a8"></div>
<div style="left:101px;top:784px;width:1px;height:48px;background:#f0f0f0"></div>
<div style="left:103px;top:784px;width:1px;height:48px;background:#6e6e6e"></div>
<div style="left:107px;top:788px;width:200px;height:21px;background:#c8c8c8;box-sizing:border-box;border:1px solid;border-color:#6e6e6e #f0f0f0 #f0f0f0 #6e6e6e"></div>
<div class="t" style="left:113px;top:794px;font-size:11px;line-height:11px;color:#000;">1 Object Selected</div>
<div style="left:107px;top:813px;width:499px;height:19px;background:#c8c8c8;box-sizing:border-box;border:1px solid;border-color:#6e6e6e #f0f0f0 #f0f0f0 #6e6e6e"></div>
<div class="t" style="left:113px;top:818px;font-size:11px;line-height:11px;color:#000;">Click or click-and-drag to select objects</div>
<svg style="position:absolute;left:315px;top:790px;" width="11" height="14" viewBox="0 0 11 14"><path d="M3 6V4Q3 1 5.5 1Q8 1 8 4V6" fill="none" stroke="#000" stroke-width="1.4"/><rect x="1.5" y="6" width="8" height="7" fill="#000"/><path d="M2 8h7M2 10h7M2 12h7" stroke="#c8c8c8" stroke-width=".7"/></svg>
<svg style="position:absolute;left:340px;top:790px;" width="16" height="16" viewBox="0 0 16 16"><rect x=".5" y=".5" width="14" height="14" fill="none" stroke="#000" stroke-width="1.4"/><path d="M7.5 2V13M2 7.5H13" stroke="#000" stroke-width=".8"/><circle cx="7.5" cy="7.5" r="2" fill="#404040" stroke="#000"/></svg>
<div class="t" style="left:361px;top:794px;font-size:11px;line-height:11px;color:#000;">X:</div>
<div style="left:373px;top:788px;width:58px;height:21px;background:#e4e4e4;box-sizing:border-box;border:1px solid;border-color:#6e6e6e #f4f4f4 #f4f4f4 #6e6e6e;box-shadow:inset 1px 1px 0 #000, inset -1px -1px 0 #d8d8d8"></div>
<div class="t" style="left:377px;top:794px;font-size:11px;line-height:11px;color:#6e6e6e;">6.358</div>
<div class="t" style="left:444px;top:794px;font-size:11px;line-height:11px;color:#000;">Y:</div>
<div style="left:455px;top:788px;width:58px;height:21px;background:#e4e4e4;box-sizing:border-box;border:1px solid;border-color:#6e6e6e #f4f4f4 #f4f4f4 #6e6e6e;box-shadow:inset 1px 1px 0 #000, inset -1px -1px 0 #d8d8d8"></div>
<div class="t" style="left:459px;top:794px;font-size:11px;line-height:11px;color:#6e6e6e;">-99.117</div>
<div class="t" style="left:526px;top:794px;font-size:11px;line-height:11px;color:#000;">Z:</div>
<div style="left:537px;top:788px;width:58px;height:21px;background:#e4e4e4;box-sizing:border-box;border:1px solid;border-color:#6e6e6e #f4f4f4 #f4f4f4 #6e6e6e;box-shadow:inset 1px 1px 0 #000, inset -1px -1px 0 #d8d8d8"></div>
<div class="t" style="left:541px;top:794px;font-size:11px;line-height:11px;color:#6e6e6e;">0.0</div>
<div style="left:609px;top:788px;width:100px;height:21px;background:#c8c8c8;box-sizing:border-box;border:1px solid;border-color:#6e6e6e #f0f0f0 #f0f0f0 #6e6e6e"></div>
<div class="t" style="left:615px;top:794px;font-size:11px;line-height:11px;color:#000;">Grid = 10.0</div>
<div style="left:609px;top:813px;width:100px;height:19px;background:#c8c8c8;box-sizing:border-box;border:1px solid;border-color:#6e6e6e #f0f0f0 #f0f0f0 #6e6e6e"></div>
<div class="t" style="left:615px;top:818px;font-size:11px;line-height:11px;color:#000;">Add Time Tag</div>
<div style="left:710px;top:787px;width:45px;height:45px;background:#c8c8c8;box-sizing:border-box;border:1px solid;border-color:#f0f0f0 #6e6e6e #6e6e6e #f0f0f0"></div>
<svg style="position:absolute;left:720px;top:802px;" width="24" height="12" viewBox="0 0 24 12"><circle cx="5" cy="6" r="3.8" fill="none" stroke="#000" stroke-width="2"/><path d="M9 6H23M17 6V10M21 6V9" stroke="#000" stroke-width="2.4"/></svg>
<div style="left:757px;top:787px;width:48px;height:22px;background:#c8c8c8;box-sizing:border-box;border:1px solid;border-color:#f0f0f0 #6e6e6e #6e6e6e #f0f0f0"></div>
<div class="t" style="left:757px;top:792px;width:48px;text-align:center;font-size:11px;line-height:11px;color:#000">Auto Key</div>
<div style="left:757px;top:810px;width:48px;height:22px;background:#c8c8c8;box-sizing:border-box;border:1px solid;border-color:#f0f0f0 #6e6e6e #6e6e6e #f0f0f0"></div>
<div class="t" style="left:757px;top:815px;width:48px;text-align:center;font-size:11px;line-height:11px;color:#000">Set Key</div>
<div style="left:808px;top:787px;width:115px;height:21px;background:#e6e6e6;box-sizing:border-box;border-style:solid;border-width:2px 1px 1px 2px;border-color:#585e66 #dcdcdc #dcdcdc #585e66"></div>
<div style="left:906px;top:789px;width:16px;height:17px;background:#ece9d8;box-sizing:border-box;border:1px solid;border-color:#fff #7a7468 #7a7468 #fff"></div>
<svg style="position:absolute;left:910px;top:795px;" width="8" height="4" viewBox="0 0 8 4"><path d="M0 0H8L4 4Z" fill="#000"/></svg>
<div class="t" style="left:812px;top:793px;font-size:11px;line-height:11px;color:#000;">Selected</div>
<div style="left:808px;top:810px;width:115px;height:22px;background:#c8c8c8;box-sizing:border-box;border:1px solid;border-color:#f0f0f0 #6e6e6e #6e6e6e #f0f0f0"></div>
<div class="t" style="left:808px;top:815px;width:115px;text-align:center;font-size:11px;line-height:11px;color:#000">Key Filters...</div>
<div style="left:953px;top:790px;width:1px;height:16px;background:#7a7a7a"></div>
<div style="left:954px;top:790px;width:1px;height:16px;background:#f0f0f0"></div>
<div style="left:1025px;top:790px;width:1px;height:16px;background:#7a7a7a"></div>
<div style="left:1026px;top:790px;width:1px;height:16px;background:#f0f0f0"></div>
<div style="left:1054px;top:790px;width:1px;height:16px;background:#7a7a7a"></div>
<div style="left:1055px;top:790px;width:1px;height:16px;background:#f0f0f0"></div>
<div style="left:953px;top:812px;width:1px;height:16px;background:#7a7a7a"></div>
<div style="left:954px;top:812px;width:1px;height:16px;background:#f0f0f0"></div>
<div style="left:1054px;top:812px;width:1px;height:16px;background:#7a7a7a"></div>
<div style="left:1055px;top:812px;width:1px;height:16px;background:#f0f0f0"></div>
<svg style="position:absolute;left:932px;top:792px;" width="17" height="11" viewBox="0 0 17 11"><rect x="0" y="0" width="2" height="10" fill="#000"/><path d="M2 5L8 0V10ZM8 5L15 0V10Z" fill="#000"/></svg>
<svg style="position:absolute;left:960px;top:792px;" width="14" height="11" viewBox="0 0 14 11"><path d="M0 5L6 0V10Z" fill="#000"/><rect x="7" y="1" width="2" height="9" fill="#000"/><rect x="11" y="1" width="2" height="9" fill="#000"/></svg>
<div style="left:981px;top:790px;width:17px;height:16px;box-sizing:border-box;border:2px solid #000"></div>
<svg style="position:absolute;left:981px;top:790px;" width="17" height="16" viewBox="0 0 17 16"><path d="M6 4L12 8L6 12Z" fill="#000"/></svg>
<svg style="position:absolute;left:997px;top:805px;" width="4" height="4" viewBox="0 0 4 4"><path d="M4 0V4H0Z" fill="#000"/><path d="M3.5 0.5V3.5H0.5" fill="none" stroke="#fff" stroke-width=".8"/></svg>
<svg style="position:absolute;left:1005px;top:792px;" width="14" height="11" viewBox="0 0 14 11"><rect x="0" y="1" width="2" height="9" fill="#000"/><rect x="4" y="1" width="2" height="9" fill="#000"/><path d="M7 0L13 5L7 10Z" fill="#000"/></svg>
<svg style="position:absolute;left:1029px;top:792px;" width="17" height="11" viewBox="0 0 17 11"><path d="M0 0L7 5L0 10ZM7 0L13 5L7 10Z" fill="#000"/><rect x="13" y="0" width="2" height="10" fill="#000"/></svg>
<svg style="position:absolute;left:934px;top:814px;" width="12" height="9" viewBox="0 0 12 9"><rect x="0" y="0" width="1.5" height="9" fill="#000"/><path d="M1.5 4.5L5.5 1V8ZM10.5 4.5L6.5 1V8Z" fill="#000"/><rect x="10.5" y="0" width="1.5" height="9" fill="#000"/></svg>
<div style="left:955px;top:810px;width:64px;height:21px;background:#e4e4e4;box-sizing:border-box;border:1px solid;border-color:#6e6e6e #f4f4f4 #f4f4f4 #6e6e6e;box-shadow:inset 1px 1px 0 #000, inset -1px -1px 0 #d8d8d8"></div>
<div class="t" style="left:959px;top:816px;font-size:11px;line-height:11px;color:#000;">0</div>
<div style="left:1019px;top:811px;width:11px;height:8px;background:#c8c8c8;box-sizing:border-box;border:1px solid;border-color:#f0f0f0 #6e6e6e #6e6e6e #f0f0f0"></div>
<div style="left:1019px;top:819px;width:11px;height:9px;background:#c8c8c8;box-sizing:border-box;border:1px solid;border-color:#f0f0f0 #6e6e6e #6e6e6e #f0f0f0"></div>
<svg style="position:absolute;left:1019px;top:811px;" width="11" height="17" viewBox="0 0 11 17"><path d="M2.5 6L5.5 3L8.5 6Z M2.5 10L5.5 13L8.5 10Z" fill="#000"/></svg>
<svg style="position:absolute;left:1034px;top:812px;" width="16" height="16" viewBox="0 0 16 16"><rect x=".5" y="1.5" width="12" height="8" fill="#fff" stroke="#444"/><circle cx="9" cy="10" r="5" fill="#c8c8c8" stroke="#c02020"/><path d="M9 7V10H11" stroke="#000"/></svg>
<svg style="position:absolute;left:1060px;top:790px;" width="15" height="16" viewBox="0 0 15 16"><circle cx="5.5" cy="5.5" r="4.5" fill="#d8d8d8" stroke="#000080" stroke-width="1.3"/><path d="M9 9L14 14" stroke="#000080" stroke-width="2.2"/></svg>
<svg style="position:absolute;left:1081px;top:790px;" width="18" height="16" viewBox="0 0 18 16"><rect x="5" y="1" width="12" height="10" fill="#d0d0d0" stroke="#a01818" stroke-width="1.2"/><path d="M11 1V11M5 6H17" stroke="#a01818" stroke-width="1.2"/><circle cx="5" cy="10" r="3.5" fill="#d8d8d8" stroke="#000080" stroke-width="1.2"/><path d="M8 13L10 15" stroke="#000080" stroke-width="1.5"/></svg>
<svg style="position:absolute;left:1104px;top:789px;" width="20" height="18" viewBox="0 0 20 18"><path d="M1.5 4.5V1.5H4.5M16.5 1.5H19.5V4.5M1.5 15V18H4.5M19.5 15V18H16.5" fill="none" stroke="#000" stroke-width="1.4"/><path d="M4 7L6.5 4.5H15L12.5 7Z" fill="#fff" stroke="#0000a0" stroke-width="1.2"/><path d="M12.5 7L15 4.5V13L12.5 15.5Z" fill="#909088" stroke="#0000a0" stroke-width="1.2"/><rect x="4" y="7" width="8.5" height="8.5" fill="#d0d0d0" stroke="#0000a0" stroke-width="1.2"/></svg>
<svg style="position:absolute;left:1121px;top:805px;" width="4" height="4" viewBox="0 0 4 4"><path d="M4 0V4H0Z" fill="#000"/><path d="M3.5 0.5V3.5H0.5" fill="none" stroke="#fff" stroke-width=".8"/></svg>
<svg style="position:absolute;left:1126px;top:789px;" width="20" height="18" viewBox="0 0 20 18"><rect x="5.5" y="1.5" width="13" height="11" fill="#d0d4d4" stroke="#a01818" stroke-width="1.2"/><path d="M12 1.5V12.5M5.5 7H18.5" stroke="#a01818" stroke-width="1.2"/><path d="M2.5 9L4 7.5H11.5L10 9Z" fill="#fff" stroke="#0000a0" stroke-width="1.2"/><path d="M10 9L11.5 7.5V15.5L10 17Z" fill="#d0d0d0" stroke="#0000a0" stroke-width="1.2"/><rect x="2.5" y="9" width="7.5" height="8" fill="#d0d0d0" stroke="#0000a0" stroke-width="1.2"/></svg>
<svg style="position:absolute;left:1144px;top:805px;" width="4" height="4" viewBox="0 0 4 4"><path d="M4 0V4H0Z" fill="#000"/><path d="M3.5 0.5V3.5H0.5" fill="none" stroke="#fff" stroke-width=".8"/></svg>
<svg style="position:absolute;left:1059px;top:812px;" width="16" height="15" viewBox="0 0 16 15"><rect x=".5" y=".5" width="15" height="14" fill="#d4d4d4" stroke="#000" stroke-dasharray="2 1"/><circle cx="6" cy="6" r="3.5" fill="#d8d8d8" stroke="#000080" stroke-width="1.1"/><path d="M8.5 8.5L12 12" stroke="#000080" stroke-width="2"/></svg>
<svg style="position:absolute;left:1082px;top:812px;" width="16" height="16" viewBox="0 0 16 16"><path d="M3 9Q1 7 2 6Q3 5 5 7V2Q5 1 6 1Q7 1 7 2V6V1Q7 0 8.5 0Q10 0 10 1V6V2Q10 1 11 1Q12 1 12 2V7V4Q12 3 13 3Q14 3 14 4V10Q14 15 9 15H7Q5 15 3 9Z" fill="#e8e8e8" stroke="#000" stroke-width=".9"/></svg>
<svg style="position:absolute;left:1105px;top:812px;" width="17" height="16" viewBox="0 0 17 16"><circle cx="7" cy="9" r="5" fill="none" stroke="#000" stroke-width="1.2"/><path d="M7 9V1M7 9L15 9M7 9L1 15" stroke="#000080" stroke-width="1.2"/><path d="M5 3L7 0L9 3Z M13 7L16 9L13 11Z" fill="#000"/></svg>
<svg style="position:absolute;left:1119px;top:825px;" width="4" height="4" viewBox="0 0 4 4"><path d="M4 0V4H0Z" fill="#000"/><path d="M3.5 0.5V3.5H0.5" fill="none" stroke="#fff" stroke-width=".8"/></svg>
<svg style="position:absolute;left:1129px;top:812px;" width="16" height="16" viewBox="0 0 16 16"><rect x=".5" y=".5" width="11" height="11" fill="none" stroke="#000080" stroke-width="1.2"/><rect x="8.5" y="7.5" width="6.5" height="7.5" fill="none" stroke="#000" stroke-width="1.2"/><path d="M3 3L8 8M3 3H6M3 3V6" stroke="#000" stroke-width=".9" stroke-dasharray="1 1"/></svg>
</body></html>
